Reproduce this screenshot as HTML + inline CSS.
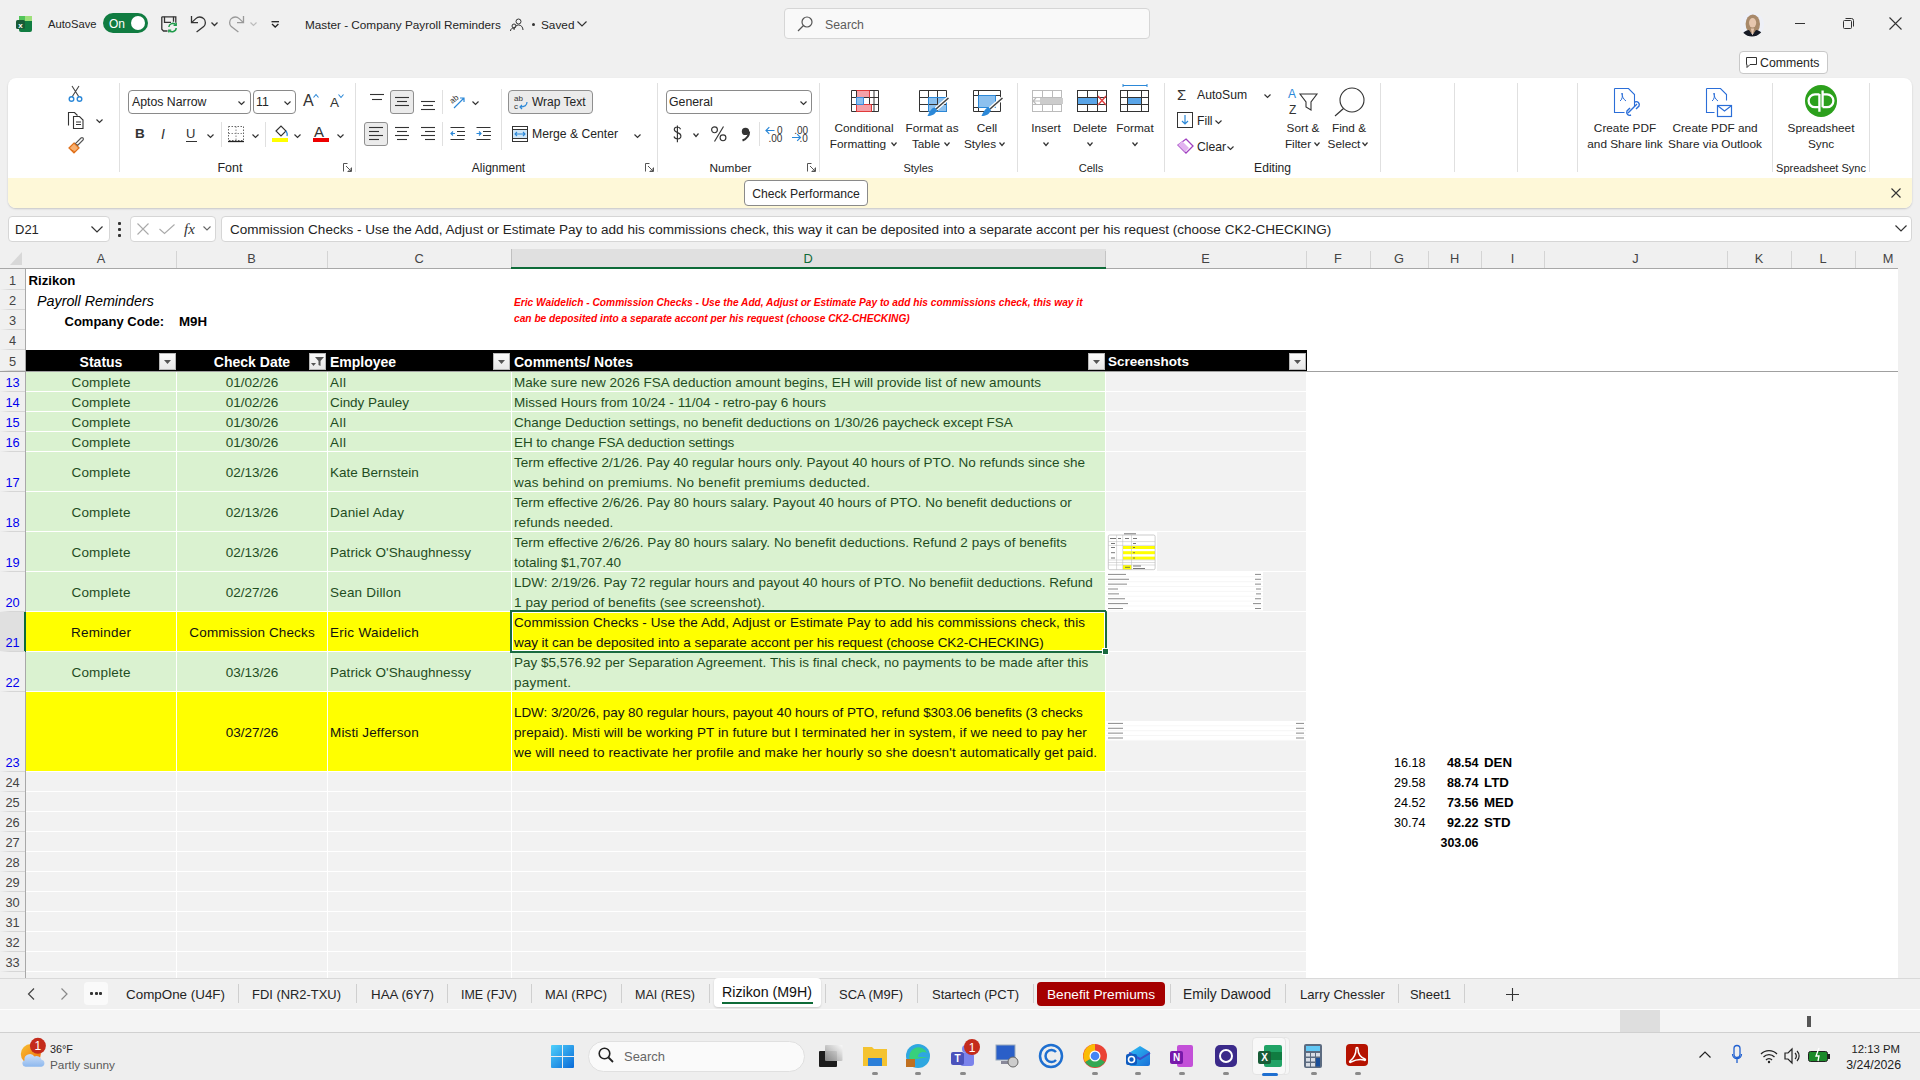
<!DOCTYPE html><html><head><meta charset="utf-8"><style>
html,body{margin:0;padding:0;}
body{width:1920px;height:1080px;position:relative;overflow:hidden;background:#f0f0f0;font-family:"Liberation Sans",sans-serif;}
.t{position:absolute;white-space:nowrap;line-height:20px;}
.r{position:absolute;}
svg.r{overflow:visible}
</style></head><body>
<svg class="r" style="left:16px;top:16px;" width="16" height="16" viewBox="0 0 16 16"><rect x="3" y="0" width="13" height="16" rx="2" fill="#107c41"/><rect x="9" y="0" width="7" height="5" fill="#9de07a"/><rect x="3" y="0" width="6" height="5" fill="#52c45a"/><rect x="0" y="4" width="9" height="9" rx="1.5" fill="#185c37"/><text x="4.5" y="11.5" font-size="8" font-weight="700" fill="#fff" text-anchor="middle" font-family="Liberation Sans">x</text></svg>
<div class="t" style="left:48px;top:14.0px;font-size:11.2px;color:#242424;font-weight:400;font-style:normal;">AutoSave</div>
<div class="r" style="left:103px;top:13px;width:45px;height:20px;border-radius:10px;background:#107c41;"></div>
<div class="r" style="left:131px;top:16px;width:14px;height:14px;border-radius:7px;background:#fff;"></div>
<div class="t" style="left:109px;top:14.3px;font-size:12px;color:#fff;font-weight:400;font-style:normal;">On</div>
<svg class="r" style="left:161px;top:16px;" width="17" height="17" viewBox="0 0 17 17"><path d="M0.8 0.8h14v6M0.8 0.8v12.5l1.7 1.7h4" fill="none" stroke="#333" stroke-width="1.3"/><path d="M3.5 0.8v5.5h6.5M12.5 0.8v5" fill="none" stroke="#333" stroke-width="1.3"/><path d="M7.8 11a4 4 0 0 1 7-2.2M15.2 12a4 4 0 0 1-7 2.4" fill="none" stroke="#1e9b4a" stroke-width="1.5"/><path d="M15.2 6.8v2.6h-2.6M7.8 16.5v-2.4h2.4" fill="none" stroke="#1e9b4a" stroke-width="1.4"/></svg>
<svg class="r" style="left:190px;top:16px;" width="16" height="17" viewBox="0 0 16 17"><path d="M1.5 0v6.7H8" fill="none" stroke="#333" stroke-width="1.3"/><path d="M1.8 6.4L5.8 2.6a5.6 5.6 0 0 1 7.9 8L6.6 16" fill="none" stroke="#333" stroke-width="1.3"/></svg>
<svg class="r" style="left:211px;top:22px;" width="7" height="4" viewBox="0 0 7 4"><path d="M0.5 0.5l3 3 3-3" fill="none" stroke="#333" stroke-width="1.3"/></svg>
<svg class="r" style="left:229px;top:16px;" width="16" height="17" viewBox="0 0 16 17"><path d="M14.5 0v6.7H8" fill="none" stroke="#999" stroke-width="1.3"/><path d="M14.2 6.4L10.2 2.6a5.6 5.6 0 0 0-7.9 8L9.4 16" fill="none" stroke="#999" stroke-width="1.3"/></svg>
<svg class="r" style="left:250px;top:22px;" width="7" height="4" viewBox="0 0 7 4"><path d="M0.5 0.5l3 3 3-3" fill="none" stroke="#bbb" stroke-width="1.2"/></svg>
<svg class="r" style="left:271px;top:21px;" width="9" height="7" viewBox="0 0 9 7"><path d="M0.5 0.7h7.5" stroke="#222" stroke-width="1.3"/><path d="M1 3l3.2 3 3.2-3" fill="none" stroke="#222" stroke-width="1.3"/></svg>
<div class="t" style="left:305px;top:14.8px;font-size:11.75px;color:#242424;font-weight:400;font-style:normal;">Master - Company Payroll Reminders</div>
<svg class="r" style="left:510px;top:18px;" width="13" height="13" viewBox="0 0 13 13"><circle cx="8.5" cy="3.5" r="2.5" fill="none" stroke="#333" stroke-width="1"/><path d="M4 12c0-3 2-5 4.5-5S13 9 13 12" fill="none" stroke="#333" stroke-width="1"/><circle cx="4" cy="8" r="2" fill="none" stroke="#333" stroke-width="1"/><path d="M0.5 13c0-2 1.5-3 3.5-3" fill="none" stroke="#333" stroke-width="1"/></svg>
<div class="r" style="left:532px;top:23px;width:3px;height:3px;background:#333;border-radius:2px;"></div>
<div class="t" style="left:541px;top:14.8px;font-size:11.8px;color:#242424;font-weight:400;font-style:normal;">Saved</div>
<svg class="r" style="left:577px;top:21px;" width="10" height="6" viewBox="0 0 10 6"><path d="M0.5 0.5l4.5 4.5 4.5-4.5" fill="none" stroke="#333" stroke-width="1.2"/></svg>
<div class="r" style="left:784px;top:8px;width:366px;height:31px;border-radius:4px;background:#f9f9f9;border:1px solid #d6d6d6;box-sizing:border-box;"></div>
<svg class="r" style="left:797px;top:16px;" width="16" height="16" viewBox="0 0 16 16"><circle cx="10" cy="6" r="5" fill="none" stroke="#555" stroke-width="1.2"/><path d="M6.5 9.5L1 15" stroke="#555" stroke-width="1.3"/></svg>
<div class="t" style="left:825px;top:14.8px;font-size:12.31px;color:#5c5c5c;font-weight:400;font-style:normal;">Search</div>
<svg class="r" style="left:1740px;top:12px;" width="24" height="25" viewBox="0 0 24 25"><defs><clipPath id="av"><circle cx="12" cy="12.5" r="12"/></clipPath></defs><g clip-path="url(#av)"><rect x="0" y="0" width="24" height="25" fill="#eef0f7"/><ellipse cx="12.8" cy="12" rx="7.2" ry="9.5" fill="#a8896a"/><ellipse cx="12.6" cy="10.8" rx="3.6" ry="4.8" fill="#e6c6ae"/><path d="M1.5 26c0-4.5 3-7.5 7.5-8l3.5 5 3.5-5c4.5.5 7.5 3.5 7.5 8z" fill="#161a24"/><path d="M10.8 16.5l1.7 7 1.7-7z" fill="#e6c6ae"/></g></svg>
<div class="r" style="left:1795px;top:23px;width:10px;height:1px;background:#333;"></div>
<svg class="r" style="left:1843px;top:18px;" width="11" height="11" viewBox="0 0 11 11"><rect x="0.5" y="2.5" width="8" height="8" rx="1" fill="none" stroke="#333"/><path d="M2.5 0.5h6a2 2 0 0 1 2 2v6" fill="none" stroke="#333"/></svg>
<svg class="r" style="left:1889px;top:17px;" width="13" height="13" viewBox="0 0 13 13"><path d="M0.5 0.5l12 12M12.5 0.5l-12 12" stroke="#333" stroke-width="1.1"/></svg>
<div class="r" style="left:1739px;top:51px;width:89px;height:23px;border-radius:4px;background:#fff;border:1px solid #c8c8c8;box-sizing:border-box;"></div>
<svg class="r" style="left:1746px;top:57px;" width="11" height="11" viewBox="0 0 11 11"><path d="M0.5 0.5h10v7H4l-3 3v-3H0.5z" fill="none" stroke="#333" stroke-width="1"/></svg>
<div class="t" style="left:1760px;top:53.3px;font-size:12.3px;color:#242424;font-weight:400;font-style:normal;">Comments</div>
<div class="r" style="left:8px;top:78px;width:1904px;height:130px;border-radius:8px;background:#fff;box-shadow:0 1px 2px rgba(0,0,0,0.18);overflow:hidden;"><div style="position:absolute;left:0;top:100px;width:1904px;height:30px;background:#fef8d8;"></div></div>
<div class="r" style="left:119px;top:83px;width:1px;height:89px;background:#e0e0e0;"></div>
<div class="r" style="left:355px;top:83px;width:1px;height:89px;background:#e0e0e0;"></div>
<div class="r" style="left:657px;top:83px;width:1px;height:89px;background:#e0e0e0;"></div>
<div class="r" style="left:819px;top:83px;width:1px;height:89px;background:#e0e0e0;"></div>
<div class="r" style="left:1017px;top:83px;width:1px;height:89px;background:#e0e0e0;"></div>
<div class="r" style="left:1164px;top:83px;width:1px;height:89px;background:#e0e0e0;"></div>
<div class="r" style="left:1380px;top:83px;width:1px;height:89px;background:#e0e0e0;"></div>
<div class="r" style="left:1454px;top:83px;width:1px;height:89px;background:#e0e0e0;"></div>
<div class="r" style="left:1517px;top:83px;width:1px;height:89px;background:#e0e0e0;"></div>
<div class="r" style="left:1577px;top:83px;width:1px;height:89px;background:#e0e0e0;"></div>
<div class="r" style="left:1772px;top:83px;width:1px;height:89px;background:#e0e0e0;"></div>
<div class="r" style="left:1869px;top:83px;width:1px;height:89px;background:#e0e0e0;"></div>
<div class="t" style="left:-770px;width:2000px;text-align:center;top:158.3px;font-size:12.5px;color:#242424;font-weight:400;font-style:normal;">Font</div>
<div class="t" style="left:-501.5px;width:2000px;text-align:center;top:158.3px;font-size:12.03px;color:#242424;font-weight:400;font-style:normal;">Alignment</div>
<div class="t" style="left:-269.5px;width:2000px;text-align:center;top:158.3px;font-size:11.81px;color:#242424;font-weight:400;font-style:normal;">Number</div>
<div class="t" style="left:-81.70000000000005px;width:2000px;text-align:center;top:158.3px;font-size:10.91px;color:#242424;font-weight:400;font-style:normal;">Styles</div>
<div class="t" style="left:91px;width:2000px;text-align:center;top:158.3px;font-size:11.11px;color:#242424;font-weight:400;font-style:normal;">Cells</div>
<div class="t" style="left:272.5999999999999px;width:2000px;text-align:center;top:158.3px;font-size:12.1px;color:#242424;font-weight:400;font-style:normal;">Editing</div>
<div class="t" style="left:821px;width:2000px;text-align:center;top:158.3px;font-size:11.01px;color:#242424;font-weight:400;font-style:normal;">Spreadsheet Sync</div>
<svg class="r" style="left:343px;top:163px;" width="9" height="9" viewBox="0 0 9 9"><path d="M0.5 8.5V0.5h4M8.5 4.5v4h-4M3 3l5 5M5 8h3V5" fill="none" stroke="#555" stroke-width="1"/></svg>
<svg class="r" style="left:645px;top:163px;" width="9" height="9" viewBox="0 0 9 9"><path d="M0.5 8.5V0.5h4M8.5 4.5v4h-4M3 3l5 5M5 8h3V5" fill="none" stroke="#555" stroke-width="1"/></svg>
<svg class="r" style="left:807px;top:163px;" width="9" height="9" viewBox="0 0 9 9"><path d="M0.5 8.5V0.5h4M8.5 4.5v4h-4M3 3l5 5M5 8h3V5" fill="none" stroke="#555" stroke-width="1"/></svg>
<svg class="r" style="left:68px;top:86px;" width="15" height="16" viewBox="0 0 15 16"><path d="M4 0l7 11M11 0L4 11" stroke="#444" stroke-width="1.1"/><circle cx="3.5" cy="13" r="2.3" fill="none" stroke="#2b88d8" stroke-width="1.4"/><circle cx="11.5" cy="13" r="2.3" fill="none" stroke="#2b88d8" stroke-width="1.4"/></svg>
<svg class="r" style="left:68px;top:112px;" width="16" height="17" viewBox="0 0 16 17"><path d="M0.5 13.5V0.5h6l3 3" fill="none" stroke="#333" stroke-width="1.1"/><path d="M5.5 4.5h6l3.5 3.5v8.5H5.5z" fill="#fff" stroke="#333" stroke-width="1.1"/><path d="M8 10h5M8 12.5h5" stroke="#333" stroke-width="1"/></svg>
<svg class="r" style="left:96px;top:119px;" width="7" height="4" viewBox="0 0 7 4"><path d="M0.5 0.5l3 3 3-3" fill="none" stroke="#333" stroke-width="1.2"/></svg>
<svg class="r" style="left:68px;top:137px;" width="17" height="17" viewBox="0 0 17 17"><path d="M9.5 8.5l5.5-5.5a1.4 1.4 0 0 0-2-2L7.5 6.5z" fill="#fff" stroke="#555" stroke-width="1.1"/><path d="M6 6l5 5" stroke="#555" stroke-width="1.1"/><path d="M1 11l5-5 5 5-5 5z" fill="#f8b070" stroke="#e0701a" stroke-width="1.2"/><path d="M2 12l5 3" stroke="#e0701a" stroke-width="1"/></svg>
<div class="r" style="left:128px;top:90px;width:123px;height:24px;background:#fff;border:1px solid #8a8a8a;border-radius:4px;box-sizing:border-box;"></div>
<div class="t" style="left:132px;top:92.3px;font-size:12.3px;color:#242424;font-weight:400;font-style:normal;">Aptos Narrow</div>
<svg class="r" style="left:238px;top:101px;" width="7" height="4" viewBox="0 0 7 4"><path d="M0.5 0.5l3.0 3 3.0-3" fill="none" stroke="#333" stroke-width="1.2"/></svg>
<div class="r" style="left:253px;top:90px;width:43px;height:24px;background:#fff;border:1px solid #8a8a8a;border-radius:4px;box-sizing:border-box;"></div>
<div class="t" style="left:256px;top:92.3px;font-size:12.3px;color:#242424;font-weight:400;font-style:normal;">11</div>
<svg class="r" style="left:284px;top:101px;" width="7" height="4" viewBox="0 0 7 4"><path d="M0.5 0.5l3.0 3 3.0-3" fill="none" stroke="#333" stroke-width="1.2"/></svg>
<div class="t" style="left:303px;top:90.8px;font-size:16px;color:#333;font-weight:400;font-style:normal;">A</div>
<svg class="r" style="left:313px;top:94px;" width="6" height="4" viewBox="0 0 6 4"><path d="M0.5 3.5l2.5-3 2.5 3" fill="none" stroke="#2b88d8" stroke-width="1.1"/></svg>
<div class="t" style="left:330px;top:92.8px;font-size:13.5px;color:#333;font-weight:400;font-style:normal;">A</div>
<svg class="r" style="left:338px;top:94px;" width="6" height="4" viewBox="0 0 6 4"><path d="M0.5 0.5l2.5 3 2.5-3" fill="none" stroke="#2b88d8" stroke-width="1.1"/></svg>
<div class="t" style="left:135px;top:124.3px;font-size:13.5px;color:#333;font-weight:700;font-style:normal;">B</div>
<div class="t" style="left:161px;top:124.3px;font-size:14px;color:#333;font-weight:400;font-style:italic;">I</div>
<div class="t" style="left:186px;top:123.8px;font-size:13px;color:#333;font-weight:400;font-style:normal;">U</div>
<div class="r" style="left:186px;top:141px;width:11px;height:1px;background:#333;"></div>
<svg class="r" style="left:207px;top:134px;" width="7" height="4" viewBox="0 0 7 4"><path d="M0.5 0.5l3.0 3 3.0-3" fill="none" stroke="#333" stroke-width="1.2"/></svg>
<div class="r" style="left:221px;top:122px;width:1px;height:25px;background:#e0e0e0;"></div>
<svg class="r" style="left:228px;top:126px;" width="16" height="16" viewBox="0 0 16 16"><rect x="0.5" y="0.5" width="15" height="14" fill="none" stroke="#666" stroke-dasharray="1.5 1.5"/><path d="M8 0.5v14M0.5 7.5h15" stroke="#888" stroke-dasharray="1.5 1.5"/><path d="M0 15.5h16" stroke="#222" stroke-width="1.3"/></svg>
<svg class="r" style="left:252px;top:134px;" width="7" height="4" viewBox="0 0 7 4"><path d="M0.5 0.5l3.0 3 3.0-3" fill="none" stroke="#333" stroke-width="1.2"/></svg>
<div class="r" style="left:265px;top:122px;width:1px;height:25px;background:#e0e0e0;"></div>
<svg class="r" style="left:272px;top:125px;" width="17" height="13" viewBox="0 0 17 13"><path d="M4 6l5-5 5 5-5 5z" fill="none" stroke="#333" stroke-width="1.1"/><path d="M14 6c1 2 2 3 1 5" fill="none" stroke="#2b88d8" stroke-width="1.4"/></svg>
<div class="r" style="left:272px;top:138px;width:16px;height:4px;background:#ffff00;"></div>
<svg class="r" style="left:294px;top:134px;" width="7" height="4" viewBox="0 0 7 4"><path d="M0.5 0.5l3.0 3 3.0-3" fill="none" stroke="#333" stroke-width="1.2"/></svg>
<div class="t" style="left:314px;top:121.8px;font-size:15px;color:#333;font-weight:400;font-style:normal;">A</div>
<div class="r" style="left:313px;top:138px;width:16px;height:4px;background:#ee0000;"></div>
<svg class="r" style="left:337px;top:134px;" width="7" height="4" viewBox="0 0 7 4"><path d="M0.5 0.5l3.0 3 3.0-3" fill="none" stroke="#333" stroke-width="1.2"/></svg>
<svg class="r" style="left:370px;top:94px;" width="20" height="11" viewBox="0 0 20 11"><path d="M0 0.5h14" stroke="#333" stroke-width="1.1"/><path d="M2 5.5h10" stroke="#333" stroke-width="1.1"/></svg>
<div class="r" style="left:390px;top:90px;width:24px;height:24px;background:#ebebeb;border:1px solid #8f8f8f;border-radius:3px;box-sizing:border-box;"></div>
<svg class="r" style="left:395px;top:97px;" width="20" height="13" viewBox="0 0 20 13"><path d="M0 0.5h14" stroke="#333" stroke-width="1.1"/><path d="M2 4.5h10" stroke="#333" stroke-width="1.1"/><path d="M0 8.5h14" stroke="#333" stroke-width="1.1"/></svg>
<svg class="r" style="left:421px;top:101px;" width="20" height="13" viewBox="0 0 20 13"><path d="M0 0.5h14" stroke="#333" stroke-width="1.1"/><path d="M2 4.5h10" stroke="#333" stroke-width="1.1"/><path d="M0 8.5h14" stroke="#333" stroke-width="1.1"/></svg>
<div class="r" style="left:442px;top:90px;width:1px;height:24px;background:#e0e0e0;"></div>
<svg class="r" style="left:449px;top:93px;" width="17" height="17" viewBox="0 0 17 17"><text x="1" y="9" font-size="8" fill="#333" transform="rotate(-40 5 7)" font-family="Liberation Sans">ab</text><path d="M5 15L15 5M11 5h4v4" fill="none" stroke="#2b88d8" stroke-width="1.2"/></svg>
<svg class="r" style="left:472px;top:101px;" width="7" height="4" viewBox="0 0 7 4"><path d="M0.5 0.5l3.0 3 3.0-3" fill="none" stroke="#333" stroke-width="1.2"/></svg>
<div class="r" style="left:501px;top:89px;width:1px;height:61px;background:#e0e0e0;"></div>
<div class="r" style="left:364px;top:122px;width:24px;height:24px;background:#ebebeb;border:1px solid #8f8f8f;border-radius:3px;box-sizing:border-box;"></div>
<svg class="r" style="left:369px;top:127px;" width="20" height="17" viewBox="0 0 20 17"><path d="M0 0.5h14" stroke="#333" stroke-width="1.1"/><path d="M0 4.5h10" stroke="#333" stroke-width="1.1"/><path d="M0 8.5h14" stroke="#333" stroke-width="1.1"/><path d="M0 12.5h10" stroke="#333" stroke-width="1.1"/></svg>
<svg class="r" style="left:395px;top:127px;" width="20" height="17" viewBox="0 0 20 17"><path d="M0 0.5h14" stroke="#333" stroke-width="1.1"/><path d="M2 4.5h10" stroke="#333" stroke-width="1.1"/><path d="M0 8.5h14" stroke="#333" stroke-width="1.1"/><path d="M2 12.5h10" stroke="#333" stroke-width="1.1"/></svg>
<svg class="r" style="left:421px;top:127px;" width="20" height="17" viewBox="0 0 20 17"><path d="M0 0.5h14" stroke="#333" stroke-width="1.1"/><path d="M4 4.5h10" stroke="#333" stroke-width="1.1"/><path d="M0 8.5h14" stroke="#333" stroke-width="1.1"/><path d="M4 12.5h10" stroke="#333" stroke-width="1.1"/></svg>
<div class="r" style="left:442px;top:122px;width:1px;height:24px;background:#e0e0e0;"></div>
<svg class="r" style="left:450px;top:127px;" width="16" height="14" viewBox="0 0 16 14"><path d="M0.5 0.5h14M7 4.5h8M7 8.5h8M0.5 12.5h14" stroke="#333" stroke-width="1.1"/><path d="M5 6.5H1M3 4.5l-2 2 2 2" fill="none" stroke="#2b88d8" stroke-width="1.2"/></svg>
<svg class="r" style="left:476px;top:127px;" width="16" height="14" viewBox="0 0 16 14"><path d="M0.5 0.5h14M7 4.5h8M7 8.5h8M0.5 12.5h14" stroke="#333" stroke-width="1.1"/><path d="M0.5 6.5H5M3 4.5l2 2-2 2" fill="none" stroke="#2b88d8" stroke-width="1.2"/></svg>
<div class="r" style="left:508px;top:90px;width:85px;height:24px;background:#ebebeb;border:1px solid #8f8f8f;border-radius:4px;box-sizing:border-box;"></div>
<svg class="r" style="left:514px;top:94px;" width="14" height="16" viewBox="0 0 14 16"><text x="0" y="7" font-size="8" fill="#333" font-family="Liberation Sans">ab</text><text x="0" y="15" font-size="8" fill="#333" font-family="Liberation Sans">c</text><path d="M13 8c0 4-3 5-7 5M8 11l-2 2 2 2" fill="none" stroke="#2b88d8" stroke-width="1.2"/></svg>
<div class="t" style="left:532px;top:92.3px;font-size:12px;color:#242424;font-weight:400;font-style:normal;">Wrap Text</div>
<svg class="r" style="left:512px;top:126px;" width="16" height="16" viewBox="0 0 16 16"><rect x="0.5" y="0.5" width="15" height="15" fill="none" stroke="#333"/><path d="M0.5 3.5h15M0.5 12.5h15" stroke="#333"/><rect x="1" y="4" width="14" height="8" fill="#cfe6f7"/><path d="M3 8h10M5 6l-2 2 2 2M11 6l2 2-2 2" fill="none" stroke="#2b88d8" stroke-width="1.1"/></svg>
<div class="t" style="left:532px;top:124.3px;font-size:12.2px;color:#242424;font-weight:400;font-style:normal;">Merge &amp; Center</div>
<svg class="r" style="left:634px;top:134px;" width="7" height="4" viewBox="0 0 7 4"><path d="M0.5 0.5l3.0 3 3.0-3" fill="none" stroke="#333" stroke-width="1.2"/></svg>
<div class="r" style="left:666px;top:90px;width:146px;height:24px;background:#fff;border:1px solid #8a8a8a;border-radius:4px;box-sizing:border-box;"></div>
<div class="t" style="left:669px;top:92.3px;font-size:12.3px;color:#242424;font-weight:400;font-style:normal;">General</div>
<svg class="r" style="left:800px;top:101px;" width="7" height="4" viewBox="0 0 7 4"><path d="M0.5 0.5l3.0 3 3.0-3" fill="none" stroke="#333" stroke-width="1.2"/></svg>
<svg class="r" style="left:673px;top:125px;" width="10" height="18" viewBox="0 0 10 18"><path d="M7.6 4.2C7 2.6 5.8 2 4.4 2 2.6 2 1.3 3 1.3 4.6c0 1.6 1.2 2.3 3.2 3 2 .7 3.4 1.5 3.4 3.3 0 1.8-1.5 2.9-3.4 2.9-1.7 0-3-.8-3.5-2.3M4.4 0.6v16.6" fill="none" stroke="#333" stroke-width="1.15"/></svg>
<svg class="r" style="left:693px;top:133px;" width="6" height="4" viewBox="0 0 6 4"><path d="M0.5 0.5l2.5 3 2.5-3" fill="none" stroke="#333" stroke-width="1.2"/></svg>
<svg class="r" style="left:711px;top:126px;" width="16" height="16" viewBox="0 0 16 16"><circle cx="3.5" cy="3.8" r="2.9" fill="none" stroke="#333" stroke-width="1.15"/><circle cx="12" cy="11.8" r="2.9" fill="none" stroke="#333" stroke-width="1.15"/><path d="M12.5 0.5L3.5 15.5" stroke="#333" stroke-width="1.15"/></svg>
<svg class="r" style="left:741px;top:127px;" width="9" height="14" viewBox="0 0 9 14"><circle cx="4.5" cy="4.4" r="3.7" fill="#333"/><path d="M8.1 4.6C8.2 8.5 5.5 11.8 1.5 13.5" fill="none" stroke="#333" stroke-width="2"/></svg>
<div class="r" style="left:759px;top:122px;width:1px;height:24px;background:#e0e0e0;"></div>
<svg class="r" style="left:765px;top:125px;" width="18" height="18" viewBox="0 0 18 18"><path d="M1 5.5h8.5M4.3 2.2L1 5.5l3.3 3.3" fill="none" stroke="#2b88d8" stroke-width="1.2"/><text x="12" y="9.3" font-size="10" fill="#333" font-family="Liberation Sans">0</text><text x="3.5" y="16.6" font-size="10" fill="#333" font-family="Liberation Sans">.00</text></svg>
<svg class="r" style="left:791px;top:125px;" width="18" height="18" viewBox="0 0 18 18"><text x="3.2" y="9.3" font-size="10" fill="#333" font-family="Liberation Sans">.00</text><path d="M1 12.5h8.5M6.2 9.2l3.3 3.3-3.3 3.3" fill="none" stroke="#2b88d8" stroke-width="1.2"/><text x="8.5" y="16.6" font-size="10" fill="#333" font-family="Liberation Sans">.0</text></svg>
<svg class="r" style="left:851px;top:90px;" width="29" height="22" viewBox="0 0 29 22"><rect x="5.5" y="0.5" width="13" height="7" fill="#f4a0a8" stroke="#e03a3a"/><rect x="5.5" y="7.5" width="7" height="7" fill="#8cc0ee" stroke="#3a8ee0"/><rect x="5.5" y="14.5" width="15" height="7" fill="#f4a0a8" stroke="#e03a3a"/><path d="M0.5 0.5h27v21H0.5z M0.5 7.5h27M0.5 14.5h27M5.5 0.5v21M23 0.5v21M18.5 7.5v7" fill="none" stroke="#333"/><path d="M5.5 0.5h13v7M5.5 7.5h7v7M5.5 14.5h15v7h-15z" fill="none" stroke="#e03a3a"/><path d="M5.5 7.5h7v7h-7z" fill="none" stroke="#3a8ee0"/></svg>
<div class="t" style="left:-136px;width:2000px;text-align:center;top:118.0px;font-size:11.8px;color:#242424;font-weight:400;font-style:normal;">Conditional</div>
<div class="t" style="left:-142px;width:2000px;text-align:center;top:134.0px;font-size:11.8px;color:#242424;font-weight:400;font-style:normal;">Formatting</div>
<svg class="r" style="left:891px;top:142px;" width="6" height="4" viewBox="0 0 6 4"><path d="M0.5 0.5l2.5 3 2.5-3" fill="none" stroke="#333" stroke-width="1.2"/></svg>
<svg class="r" style="left:919px;top:90px;" width="32" height="28" viewBox="0 0 32 28"><rect x="9.5" y="7.5" width="18" height="14" fill="#8cc0ee"/><path d="M0.5 0.5h27v21H0.5z M0.5 7.5h27M0.5 14.5h27M9.5 0.5v21M18.5 0.5v21" fill="none" stroke="#333"/><path d="M9.5 7.5h18v14h-18z" fill="none" stroke="#2b88d8"/><path d="M29.5 8L17 19" stroke="#fff" stroke-width="4"/><path d="M29.5 8L17 19" stroke="#444" stroke-width="1.6"/><path d="M16 17.5c-3 0-5 3-7.5 8.5 4 0 8-1.5 9.5-6z" fill="#2b88d8"/></svg>
<div class="t" style="left:-68px;width:2000px;text-align:center;top:118.0px;font-size:11.8px;color:#242424;font-weight:400;font-style:normal;">Format as</div>
<div class="t" style="left:-74px;width:2000px;text-align:center;top:134.0px;font-size:11.8px;color:#242424;font-weight:400;font-style:normal;">Table</div>
<svg class="r" style="left:944px;top:142px;" width="6" height="4" viewBox="0 0 6 4"><path d="M0.5 0.5l2.5 3 2.5-3" fill="none" stroke="#333" stroke-width="1.2"/></svg>
<svg class="r" style="left:973px;top:90px;" width="32" height="28" viewBox="0 0 32 28"><rect x="5.5" y="5.5" width="17" height="12" fill="#8cc0ee"/><path d="M0.5 0.5h27v21H0.5z M0.5 5.5h27M5.5 0.5v21M0.5 17.5h5" fill="none" stroke="#333"/><path d="M5.5 5.5h17v12h-17z" fill="none" stroke="#2b88d8"/><path d="M29.5 8L17 19" stroke="#fff" stroke-width="4"/><path d="M29.5 8L17 19" stroke="#444" stroke-width="1.6"/><path d="M16 17.5c-3 0-5 3-7.5 8.5 4 0 8-1.5 9.5-6z" fill="#2b88d8"/></svg>
<div class="t" style="left:-13px;width:2000px;text-align:center;top:118.0px;font-size:11.8px;color:#242424;font-weight:400;font-style:normal;">Cell</div>
<div class="t" style="left:-20px;width:2000px;text-align:center;top:134.0px;font-size:11.8px;color:#242424;font-weight:400;font-style:normal;">Styles</div>
<svg class="r" style="left:999px;top:142px;" width="6" height="4" viewBox="0 0 6 4"><path d="M0.5 0.5l2.5 3 2.5-3" fill="none" stroke="#333" stroke-width="1.2"/></svg>
<svg class="r" style="left:1032px;top:90px;" width="32" height="22" viewBox="0 0 32 22"><rect x="0.5" y="0.5" width="29" height="21" fill="none" stroke="#bbb"/><path d="M0.5 7.5h29M0.5 14.5h29M10.5 0.5v21M20.5 0.5v21" stroke="#bbb"/><rect x="8" y="8" width="23" height="6" fill="#ccc"/><path d="M8 11H1M4 8l-3 3 3 3" fill="none" stroke="#bbb" stroke-width="1.2"/></svg>
<div class="t" style="left:46px;width:2000px;text-align:center;top:118.0px;font-size:11.8px;color:#242424;font-weight:400;font-style:normal;">Insert</div>
<svg class="r" style="left:1043px;top:142px;" width="6" height="4" viewBox="0 0 6 4"><path d="M0.5 0.5l2.5 3 2.5-3" fill="none" stroke="#333" stroke-width="1.2"/></svg>
<svg class="r" style="left:1077px;top:90px;" width="31" height="22" viewBox="0 0 31 22"><rect x="0.5" y="0.5" width="29" height="21" fill="none" stroke="#333"/><path d="M0.5 7.5h29M0.5 14.5h29M10.5 0.5v21M20.5 0.5v21" stroke="#333"/><rect x="1" y="8" width="19" height="6" fill="#5aa5e8"/><path d="M21 6l8 9M29 6l-8 9" stroke="#e04040" stroke-width="1.4"/></svg>
<div class="t" style="left:90px;width:2000px;text-align:center;top:118.0px;font-size:11.8px;color:#242424;font-weight:400;font-style:normal;">Delete</div>
<svg class="r" style="left:1087px;top:142px;" width="6" height="4" viewBox="0 0 6 4"><path d="M0.5 0.5l2.5 3 2.5-3" fill="none" stroke="#333" stroke-width="1.2"/></svg>
<svg class="r" style="left:1120px;top:84px;" width="30" height="28" viewBox="0 0 30 28"><path d="M3 1.5h24M3 0v3M27 0v3" stroke="#2b88d8" stroke-width="1"/><rect x="0.5" y="6.5" width="28" height="21" fill="none" stroke="#333"/><path d="M0.5 13.5h28M0.5 20.5h28M7.5 6.5v21M21.5 6.5v21" stroke="#333"/><rect x="8" y="14" width="13" height="6" fill="#5aa5e8"/></svg>
<div class="t" style="left:135px;width:2000px;text-align:center;top:118.0px;font-size:11.8px;color:#242424;font-weight:400;font-style:normal;">Format</div>
<svg class="r" style="left:1132px;top:142px;" width="6" height="4" viewBox="0 0 6 4"><path d="M0.5 0.5l2.5 3 2.5-3" fill="none" stroke="#333" stroke-width="1.2"/></svg>
<div class="t" style="left:1177px;top:84.8px;font-size:15px;color:#333;font-weight:400;font-style:normal;">Σ</div>
<div class="t" style="left:1197px;top:85.3px;font-size:12.2px;color:#242424;font-weight:400;font-style:normal;">AutoSum</div>
<svg class="r" style="left:1264px;top:94px;" width="7" height="4" viewBox="0 0 7 4"><path d="M0.5 0.5l3.0 3 3.0-3" fill="none" stroke="#333" stroke-width="1.2"/></svg>
<svg class="r" style="left:1177px;top:112px;" width="16" height="16" viewBox="0 0 16 16"><rect x="0.5" y="0.5" width="15" height="15" fill="none" stroke="#333"/><path d="M8 3v9M5 9l3 3 3-3" fill="none" stroke="#2b88d8" stroke-width="1.2"/></svg>
<div class="t" style="left:1197px;top:110.8px;font-size:12.2px;color:#242424;font-weight:400;font-style:normal;">Fill</div>
<svg class="r" style="left:1215px;top:120px;" width="7" height="4" viewBox="0 0 7 4"><path d="M0.5 0.5l3.0 3 3.0-3" fill="none" stroke="#333" stroke-width="1.2"/></svg>
<svg class="r" style="left:1177px;top:138px;" width="17" height="16" viewBox="0 0 17 16"><path d="M9 1l7 7-7 7-8-8z" fill="none" stroke="#a040c0" stroke-width="1.3"/><path d="M1 7l4-4 7 7-4 4z" fill="#e2b3f0"/></svg>
<div class="t" style="left:1197px;top:136.8px;font-size:12.2px;color:#242424;font-weight:400;font-style:normal;">Clear</div>
<svg class="r" style="left:1227px;top:146px;" width="7" height="4" viewBox="0 0 7 4"><path d="M0.5 0.5l3.0 3 3.0-3" fill="none" stroke="#333" stroke-width="1.2"/></svg>
<svg class="r" style="left:1288px;top:87px;" width="31" height="29" viewBox="0 0 31 29"><text x="0" y="11" font-size="12" fill="#2b88d8" font-family="Liberation Sans">A</text><text x="1" y="27" font-size="12" fill="#333" font-family="Liberation Sans">Z</text><path d="M12 7h17l-6 8v8l-5-3v-5z" fill="none" stroke="#333" stroke-width="1.1"/></svg>
<div class="t" style="left:303px;width:2000px;text-align:center;top:118.0px;font-size:11.8px;color:#242424;font-weight:400;font-style:normal;">Sort &amp;</div>
<div class="t" style="left:298px;width:2000px;text-align:center;top:134.0px;font-size:11.8px;color:#242424;font-weight:400;font-style:normal;">Filter</div>
<svg class="r" style="left:1314px;top:142px;" width="6" height="4" viewBox="0 0 6 4"><path d="M0.5 0.5l2.5 3 2.5-3" fill="none" stroke="#333" stroke-width="1.2"/></svg>
<svg class="r" style="left:1334px;top:87px;" width="31" height="29" viewBox="0 0 31 29"><circle cx="18" cy="13" r="12" fill="none" stroke="#333" stroke-width="1.1"/><path d="M9.5 21.5L1 29" stroke="#333" stroke-width="1.2"/></svg>
<div class="t" style="left:349px;width:2000px;text-align:center;top:118.0px;font-size:11.8px;color:#242424;font-weight:400;font-style:normal;">Find &amp;</div>
<div class="t" style="left:344px;width:2000px;text-align:center;top:134.0px;font-size:11.8px;color:#242424;font-weight:400;font-style:normal;">Select</div>
<svg class="r" style="left:1362px;top:142px;" width="6" height="4" viewBox="0 0 6 4"><path d="M0.5 0.5l2.5 3 2.5-3" fill="none" stroke="#333" stroke-width="1.2"/></svg>
<svg class="r" style="left:1614px;top:88px;" width="28" height="30" viewBox="0 0 28 30"><path d="M0.5 0.5h14l6 6v12" fill="none" stroke="#2b6ed8" stroke-width="1.1"/><path d="M0.5 0.5v24h10" fill="none" stroke="#2b6ed8" stroke-width="1.1"/><path d="M6 13c2-1 3-5 2-8 0 3 1 6 4 8" fill="none" stroke="#2b6ed8" stroke-width="1"/><path d="M14 25l9-9M17 27a3 3 0 0 1-4-4l3-3M21 14a3 3 0 0 1 4 4l-3 3" fill="none" stroke="#2b6ed8" stroke-width="1.4"/></svg>
<div class="t" style="left:625px;width:2000px;text-align:center;top:118.0px;font-size:11.8px;color:#242424;font-weight:400;font-style:normal;">Create PDF</div>
<div class="t" style="left:625px;width:2000px;text-align:center;top:134.0px;font-size:11.8px;color:#242424;font-weight:400;font-style:normal;">and Share link</div>
<svg class="r" style="left:1706px;top:88px;" width="28" height="30" viewBox="0 0 28 30"><path d="M0.5 0.5h14l6 6v6" fill="none" stroke="#2b6ed8" stroke-width="1.1"/><path d="M0.5 0.5v24h8" fill="none" stroke="#2b6ed8" stroke-width="1.1"/><path d="M6 13c2-1 3-5 2-8 0 3 1 6 4 8" fill="none" stroke="#2b6ed8" stroke-width="1"/><rect x="11.5" y="17.5" width="14" height="11" fill="#fff" stroke="#2b6ed8" stroke-width="1.2"/><path d="M12 18l6.5 5 6.5-5" fill="none" stroke="#2b6ed8" stroke-width="1.1"/></svg>
<div class="t" style="left:715px;width:2000px;text-align:center;top:118.0px;font-size:11.8px;color:#242424;font-weight:400;font-style:normal;">Create PDF and</div>
<div class="t" style="left:715px;width:2000px;text-align:center;top:134.0px;font-size:11.8px;color:#242424;font-weight:400;font-style:normal;">Share via Outlook</div>
<svg class="r" style="left:1805px;top:85px;" width="32" height="32" viewBox="0 0 32 32"><circle cx="16" cy="16" r="16" fill="#2ca01c"/><path d="M14.4 9.4H10a6.4 6.4 0 0 0 0 12.8h4.4M14.4 9v17.7M17.6 5.6v16.6M17.6 9.4H22a6.4 6.4 0 0 1 0 12.8h-4.4" fill="none" stroke="#fff" stroke-width="2.3"/></svg>
<div class="t" style="left:821px;width:2000px;text-align:center;top:118.0px;font-size:11.8px;color:#242424;font-weight:400;font-style:normal;">Spreadsheet</div>
<div class="t" style="left:821px;width:2000px;text-align:center;top:134.0px;font-size:11.8px;color:#242424;font-weight:400;font-style:normal;">Sync</div>
<div class="r" style="left:744px;top:180px;width:124px;height:26px;background:#fff;border:1px solid #8a8a8a;border-radius:4px;box-sizing:border-box;"></div>
<div class="t" style="left:-194px;width:2000px;text-align:center;top:183.8px;font-size:12.2px;color:#242424;font-weight:400;font-style:normal;">Check Performance</div>
<svg class="r" style="left:1891px;top:188px;" width="10" height="10" viewBox="0 0 10 10"><path d="M0.5 0.5l9 9M9.5 0.5l-9 9" stroke="#333" stroke-width="1.1"/></svg>
<div class="r" style="left:8px;top:216px;width:102px;height:26px;background:#fff;border:1px solid #d6d6d6;border-radius:4px;box-sizing:border-box;"></div>
<div class="t" style="left:15px;top:219.8px;font-size:13px;color:#242424;font-weight:400;font-style:normal;">D21</div>
<svg class="r" style="left:91px;top:226px;" width="12" height="7" viewBox="0 0 12 7"><path d="M0.5 0.5l5.5 5.5 5.5-5.5" fill="none" stroke="#333" stroke-width="1.2"/></svg>
<div class="r" style="left:118px;top:222px;width:3px;height:3px;background:#333;border-radius:1px;"></div>
<div class="r" style="left:118px;top:228px;width:3px;height:3px;background:#333;border-radius:1px;"></div>
<div class="r" style="left:118px;top:234px;width:3px;height:3px;background:#333;border-radius:1px;"></div>
<div class="r" style="left:130px;top:216px;width:86px;height:26px;background:#fff;border:1px solid #d6d6d6;border-radius:4px;box-sizing:border-box;"></div>
<svg class="r" style="left:137px;top:223px;" width="12" height="12" viewBox="0 0 12 12"><path d="M0.5 0.5l11 11M11.5 0.5l-11 11" stroke="#aaa" stroke-width="1.1"/></svg>
<svg class="r" style="left:159px;top:224px;" width="16" height="10" viewBox="0 0 16 10"><path d="M0.5 5l5 4.5L15.5 0.5" fill="none" stroke="#aaa" stroke-width="1.1"/></svg>
<div class="t" style="left:184px;top:219.3px;font-size:15px;color:#333;font-weight:400;font-style:italic;font-family:'Liberation Serif',serif;">fx</div>
<svg class="r" style="left:203px;top:226px;" width="8" height="5" viewBox="0 0 8 5"><path d="M0.5 0.5l3.5 3.5 3.5-3.5" fill="none" stroke="#666" stroke-width="1.1"/></svg>
<div class="r" style="left:221px;top:216px;width:1691px;height:26px;background:#fff;border:1px solid #d6d6d6;border-radius:4px;box-sizing:border-box;"></div>
<div class="t" style="left:230px;top:219.8px;font-size:13.52px;color:#242424;font-weight:400;font-style:normal;">Commission Checks - Use the Add, Adjust or Estimate Pay to add his commissions check, this way it can be deposited into a separate accont per his request (choose CK2-CHECKING)</div>
<svg class="r" style="left:1895px;top:225px;" width="12" height="7" viewBox="0 0 12 7"><path d="M0.5 0.5l5.5 5.5 5.5-5.5" fill="none" stroke="#333" stroke-width="1.2"/></svg>
<div class="r" style="left:26px;top:269px;width:1872px;height:709px;background:#ffffff;"></div>
<div class="r" style="left:0px;top:249px;width:1898px;height:19px;background:#f0f0f0;"></div>
<div class="r" style="left:0px;top:268px;width:1898px;height:1px;background:#a8a8a8;"></div>
<svg class="r" style="left:10px;top:252px;" width="13" height="13" viewBox="0 0 13 13"><path d="M12 0v13H0z" fill="#d8d8d8"/></svg>
<div class="t" style="left:-899.0px;width:2000px;text-align:center;top:249.3px;font-size:12.8px;color:#444;font-weight:400;font-style:normal;">A</div>
<div class="r" style="left:176px;top:251px;width:1px;height:17px;background:#d4d4d4;"></div>
<div class="t" style="left:-748.5px;width:2000px;text-align:center;top:249.3px;font-size:12.8px;color:#444;font-weight:400;font-style:normal;">B</div>
<div class="r" style="left:327px;top:251px;width:1px;height:17px;background:#d4d4d4;"></div>
<div class="t" style="left:-581.0px;width:2000px;text-align:center;top:249.3px;font-size:12.8px;color:#444;font-weight:400;font-style:normal;">C</div>
<div class="r" style="left:511px;top:251px;width:1px;height:17px;background:#d4d4d4;"></div>
<div class="r" style="left:511px;top:249px;width:595px;height:18px;background:#e0e0e0;"></div>
<div class="r" style="left:511px;top:267px;width:595px;height:2px;background:#0e6b38;"></div>
<div class="r" style="left:1105px;top:251px;width:1px;height:16px;background:#c4c4c4;"></div>
<div class="t" style="left:-192.0px;width:2000px;text-align:center;top:249.3px;font-size:12.8px;color:#0e6b38;font-weight:400;font-style:normal;">D</div>
<div class="t" style="left:205.5px;width:2000px;text-align:center;top:249.3px;font-size:12.8px;color:#444;font-weight:400;font-style:normal;">E</div>
<div class="r" style="left:1306px;top:251px;width:1px;height:17px;background:#d4d4d4;"></div>
<div class="t" style="left:338.0px;width:2000px;text-align:center;top:249.3px;font-size:12.8px;color:#444;font-weight:400;font-style:normal;">F</div>
<div class="r" style="left:1370px;top:251px;width:1px;height:17px;background:#d4d4d4;"></div>
<div class="t" style="left:399.0px;width:2000px;text-align:center;top:249.3px;font-size:12.8px;color:#444;font-weight:400;font-style:normal;">G</div>
<div class="r" style="left:1428px;top:251px;width:1px;height:17px;background:#d4d4d4;"></div>
<div class="t" style="left:454.5px;width:2000px;text-align:center;top:249.3px;font-size:12.8px;color:#444;font-weight:400;font-style:normal;">H</div>
<div class="r" style="left:1481px;top:251px;width:1px;height:17px;background:#d4d4d4;"></div>
<div class="t" style="left:512.5px;width:2000px;text-align:center;top:249.3px;font-size:12.8px;color:#444;font-weight:400;font-style:normal;">I</div>
<div class="r" style="left:1544px;top:251px;width:1px;height:17px;background:#d4d4d4;"></div>
<div class="t" style="left:635.5px;width:2000px;text-align:center;top:249.3px;font-size:12.8px;color:#444;font-weight:400;font-style:normal;">J</div>
<div class="r" style="left:1727px;top:251px;width:1px;height:17px;background:#d4d4d4;"></div>
<div class="t" style="left:759.0px;width:2000px;text-align:center;top:249.3px;font-size:12.8px;color:#444;font-weight:400;font-style:normal;">K</div>
<div class="r" style="left:1791px;top:251px;width:1px;height:17px;background:#d4d4d4;"></div>
<div class="t" style="left:823.0px;width:2000px;text-align:center;top:249.3px;font-size:12.8px;color:#444;font-weight:400;font-style:normal;">L</div>
<div class="r" style="left:1855px;top:251px;width:1px;height:17px;background:#d4d4d4;"></div>
<div class="t" style="left:888px;width:2000px;text-align:center;top:249.3px;font-size:12.8px;color:#444;font-weight:400;font-style:normal;">M</div>
<div class="r" style="left:511px;top:249px;width:1px;height:18px;background:#c0c0c0;"></div>
<div class="r" style="left:0px;top:269px;width:25px;height:709px;background:#f0f0f0;"></div>
<div class="r" style="left:25px;top:269px;width:1px;height:709px;background:#a8a8a8;"></div>
<div class="t" style="left:-987.5px;width:2000px;text-align:center;top:271.3px;font-size:12.8px;color:#444;font-weight:400;font-style:normal;">1</div>
<div class="r" style="left:0;top:289px;width:25px;height:1px;background:linear-gradient(90deg,rgba(220,220,220,0),#d6d6d6 40%)"></div>
<div class="t" style="left:-987.5px;width:2000px;text-align:center;top:291.3px;font-size:12.8px;color:#444;font-weight:400;font-style:normal;">2</div>
<div class="r" style="left:0;top:309px;width:25px;height:1px;background:linear-gradient(90deg,rgba(220,220,220,0),#d6d6d6 40%)"></div>
<div class="t" style="left:-987.5px;width:2000px;text-align:center;top:311.3px;font-size:12.8px;color:#444;font-weight:400;font-style:normal;">3</div>
<div class="r" style="left:0;top:329px;width:25px;height:1px;background:linear-gradient(90deg,rgba(220,220,220,0),#d6d6d6 40%)"></div>
<div class="t" style="left:-987.5px;width:2000px;text-align:center;top:331.3px;font-size:12.8px;color:#444;font-weight:400;font-style:normal;">4</div>
<div class="r" style="left:0;top:349px;width:25px;height:1px;background:linear-gradient(90deg,rgba(220,220,220,0),#d6d6d6 40%)"></div>
<div class="t" style="left:-987.5px;width:2000px;text-align:center;top:352.3px;font-size:12.8px;color:#444;font-weight:400;font-style:normal;">5</div>
<div class="r" style="left:0;top:370px;width:25px;height:1px;background:linear-gradient(90deg,rgba(220,220,220,0),#d6d6d6 40%)"></div>
<div class="t" style="left:-987.5px;width:2000px;text-align:center;top:373.3px;font-size:12.8px;color:#0000ee;font-weight:400;font-style:normal;">13</div>
<div class="r" style="left:0;top:391px;width:25px;height:1px;background:linear-gradient(90deg,rgba(220,220,220,0),#d6d6d6 40%)"></div>
<div class="t" style="left:-987.5px;width:2000px;text-align:center;top:393.3px;font-size:12.8px;color:#0000ee;font-weight:400;font-style:normal;">14</div>
<div class="r" style="left:0;top:411px;width:25px;height:1px;background:linear-gradient(90deg,rgba(220,220,220,0),#d6d6d6 40%)"></div>
<div class="t" style="left:-987.5px;width:2000px;text-align:center;top:413.3px;font-size:12.8px;color:#0000ee;font-weight:400;font-style:normal;">15</div>
<div class="r" style="left:0;top:431px;width:25px;height:1px;background:linear-gradient(90deg,rgba(220,220,220,0),#d6d6d6 40%)"></div>
<div class="t" style="left:-987.5px;width:2000px;text-align:center;top:433.3px;font-size:12.8px;color:#0000ee;font-weight:400;font-style:normal;">16</div>
<div class="r" style="left:0;top:451px;width:25px;height:1px;background:linear-gradient(90deg,rgba(220,220,220,0),#d6d6d6 40%)"></div>
<div class="t" style="left:-987.5px;width:2000px;text-align:center;top:473.3px;font-size:12.8px;color:#0000ee;font-weight:400;font-style:normal;">17</div>
<div class="r" style="left:0;top:491px;width:25px;height:1px;background:linear-gradient(90deg,rgba(220,220,220,0),#d6d6d6 40%)"></div>
<div class="t" style="left:-987.5px;width:2000px;text-align:center;top:513.3px;font-size:12.8px;color:#0000ee;font-weight:400;font-style:normal;">18</div>
<div class="r" style="left:0;top:531px;width:25px;height:1px;background:linear-gradient(90deg,rgba(220,220,220,0),#d6d6d6 40%)"></div>
<div class="t" style="left:-987.5px;width:2000px;text-align:center;top:553.3px;font-size:12.8px;color:#0000ee;font-weight:400;font-style:normal;">19</div>
<div class="r" style="left:0;top:571px;width:25px;height:1px;background:linear-gradient(90deg,rgba(220,220,220,0),#d6d6d6 40%)"></div>
<div class="t" style="left:-987.5px;width:2000px;text-align:center;top:593.3px;font-size:12.8px;color:#0000ee;font-weight:400;font-style:normal;">20</div>
<div class="r" style="left:0;top:611px;width:25px;height:1px;background:linear-gradient(90deg,rgba(220,220,220,0),#d6d6d6 40%)"></div>
<div class="r" style="left:0px;top:612px;width:24px;height:39px;background:#e0e0e0;"></div>
<div class="r" style="left:24px;top:612px;width:2px;height:40px;background:#0e6b38;"></div>
<div class="t" style="left:-987.5px;width:2000px;text-align:center;top:633.3px;font-size:12.8px;color:#0000ee;font-weight:400;font-style:normal;">21</div>
<div class="r" style="left:0;top:651px;width:25px;height:1px;background:linear-gradient(90deg,rgba(220,220,220,0),#d6d6d6 40%)"></div>
<div class="t" style="left:-987.5px;width:2000px;text-align:center;top:673.3px;font-size:12.8px;color:#0000ee;font-weight:400;font-style:normal;">22</div>
<div class="r" style="left:0;top:691px;width:25px;height:1px;background:linear-gradient(90deg,rgba(220,220,220,0),#d6d6d6 40%)"></div>
<div class="t" style="left:-987.5px;width:2000px;text-align:center;top:753.3px;font-size:12.8px;color:#0000ee;font-weight:400;font-style:normal;">23</div>
<div class="r" style="left:0;top:771px;width:25px;height:1px;background:linear-gradient(90deg,rgba(220,220,220,0),#d6d6d6 40%)"></div>
<div class="t" style="left:-987.5px;width:2000px;text-align:center;top:773.3px;font-size:12.8px;color:#444;font-weight:400;font-style:normal;">24</div>
<div class="r" style="left:0;top:791px;width:25px;height:1px;background:linear-gradient(90deg,rgba(220,220,220,0),#d6d6d6 40%)"></div>
<div class="t" style="left:-987.5px;width:2000px;text-align:center;top:793.3px;font-size:12.8px;color:#444;font-weight:400;font-style:normal;">25</div>
<div class="r" style="left:0;top:811px;width:25px;height:1px;background:linear-gradient(90deg,rgba(220,220,220,0),#d6d6d6 40%)"></div>
<div class="t" style="left:-987.5px;width:2000px;text-align:center;top:813.3px;font-size:12.8px;color:#444;font-weight:400;font-style:normal;">26</div>
<div class="r" style="left:0;top:831px;width:25px;height:1px;background:linear-gradient(90deg,rgba(220,220,220,0),#d6d6d6 40%)"></div>
<div class="t" style="left:-987.5px;width:2000px;text-align:center;top:833.3px;font-size:12.8px;color:#444;font-weight:400;font-style:normal;">27</div>
<div class="r" style="left:0;top:851px;width:25px;height:1px;background:linear-gradient(90deg,rgba(220,220,220,0),#d6d6d6 40%)"></div>
<div class="t" style="left:-987.5px;width:2000px;text-align:center;top:853.3px;font-size:12.8px;color:#444;font-weight:400;font-style:normal;">28</div>
<div class="r" style="left:0;top:871px;width:25px;height:1px;background:linear-gradient(90deg,rgba(220,220,220,0),#d6d6d6 40%)"></div>
<div class="t" style="left:-987.5px;width:2000px;text-align:center;top:873.3px;font-size:12.8px;color:#444;font-weight:400;font-style:normal;">29</div>
<div class="r" style="left:0;top:891px;width:25px;height:1px;background:linear-gradient(90deg,rgba(220,220,220,0),#d6d6d6 40%)"></div>
<div class="t" style="left:-987.5px;width:2000px;text-align:center;top:893.3px;font-size:12.8px;color:#444;font-weight:400;font-style:normal;">30</div>
<div class="r" style="left:0;top:911px;width:25px;height:1px;background:linear-gradient(90deg,rgba(220,220,220,0),#d6d6d6 40%)"></div>
<div class="t" style="left:-987.5px;width:2000px;text-align:center;top:913.3px;font-size:12.8px;color:#444;font-weight:400;font-style:normal;">31</div>
<div class="r" style="left:0;top:931px;width:25px;height:1px;background:linear-gradient(90deg,rgba(220,220,220,0),#d6d6d6 40%)"></div>
<div class="t" style="left:-987.5px;width:2000px;text-align:center;top:933.3px;font-size:12.8px;color:#444;font-weight:400;font-style:normal;">32</div>
<div class="r" style="left:0;top:951px;width:25px;height:1px;background:linear-gradient(90deg,rgba(220,220,220,0),#d6d6d6 40%)"></div>
<div class="t" style="left:-987.5px;width:2000px;text-align:center;top:953.3px;font-size:12.8px;color:#444;font-weight:400;font-style:normal;">33</div>
<div class="r" style="left:0;top:971px;width:25px;height:1px;background:linear-gradient(90deg,rgba(220,220,220,0),#d6d6d6 40%)"></div>
<div class="t" style="left:-987.5px;width:2000px;text-align:center;top:973.3px;font-size:12.8px;color:#444;font-weight:400;font-style:normal;">34</div>
<div class="r" style="left:0;top:991px;width:25px;height:1px;background:linear-gradient(90deg,rgba(220,220,220,0),#d6d6d6 40%)"></div>
<div class="r" style="left:0px;top:371px;width:1898px;height:1px;background:#a0a0a0;"></div>
<div class="t" style="left:28.5px;top:270.5px;font-size:13.2px;color:#000;font-weight:700;font-style:normal;">Rizikon</div>
<div class="t" style="left:37px;top:291.2px;font-size:14.3px;color:#000;font-weight:400;font-style:italic;">Payroll Reminders</div>
<div class="t" style="left:64.5px;top:311.8px;font-size:13px;color:#000;font-weight:700;font-style:normal;">Company Code:</div>
<div class="t" style="left:179px;top:311.8px;font-size:13.3px;color:#000;font-weight:700;font-style:normal;">M9H</div>
<div class="t" style="left:514px;top:292.8px;font-size:10.2px;color:#ff0000;font-weight:700;font-style:italic;">Eric Waidelich - Commission Checks - Use the Add, Adjust or Estimate Pay to add his commissions check, this way it</div>
<div class="t" style="left:514px;top:308.8px;font-size:10.2px;color:#ff0000;font-weight:700;font-style:italic;">can be deposited into a separate accont per his request (choose CK2-CHECKING)</div>
<div class="r" style="left:26px;top:350px;width:1281px;height:21px;background:#000;"></div>
<div class="t" style="left:-899px;width:2000px;text-align:center;top:352.3px;font-size:14px;color:#fff;font-weight:700;font-style:normal;">Status</div>
<div class="t" style="left:-748px;width:2000px;text-align:center;top:352.3px;font-size:14px;color:#fff;font-weight:700;font-style:normal;">Check Date</div>
<div class="t" style="left:330px;top:352.3px;font-size:14px;color:#fff;font-weight:700;font-style:normal;">Employee</div>
<div class="t" style="left:514px;top:352.3px;font-size:14px;color:#fff;font-weight:700;font-style:normal;">Comments/ Notes</div>
<div class="t" style="left:1108px;top:352.3px;font-size:13.5px;color:#fff;font-weight:700;font-style:normal;">Screenshots</div>
<div class="r" style="left:159px;top:353px;width:17px;height:17px;background:linear-gradient(#fafafa,#e8e8e8);border:1px solid #b8b8b8;box-sizing:border-box;"></div>
<svg class="r" style="left:164px;top:360px;" width="7" height="4" viewBox="0 0 7 4"><path d="M0 0h7l-3.5 4z" fill="#555"/></svg>
<div class="r" style="left:309px;top:353px;width:17px;height:17px;background:linear-gradient(#fafafa,#e8e8e8);border:1px solid #b8b8b8;box-sizing:border-box;"></div>
<svg class="r" style="left:311px;top:357px;" width="13" height="10" viewBox="0 0 13 10"><path d="M4 0h9l-3.5 4v5l-2-1V4z" fill="#555"/><path d="M0 6h5l-2.5 3z" fill="#555"/></svg>
<div class="r" style="left:493px;top:353px;width:17px;height:17px;background:linear-gradient(#fafafa,#e8e8e8);border:1px solid #b8b8b8;box-sizing:border-box;"></div>
<svg class="r" style="left:498px;top:360px;" width="7" height="4" viewBox="0 0 7 4"><path d="M0 0h7l-3.5 4z" fill="#555"/></svg>
<div class="r" style="left:1088px;top:353px;width:17px;height:17px;background:linear-gradient(#fafafa,#e8e8e8);border:1px solid #b8b8b8;box-sizing:border-box;"></div>
<svg class="r" style="left:1093px;top:360px;" width="7" height="4" viewBox="0 0 7 4"><path d="M0 0h7l-3.5 4z" fill="#555"/></svg>
<div class="r" style="left:1289px;top:353px;width:17px;height:17px;background:linear-gradient(#fafafa,#e8e8e8);border:1px solid #b8b8b8;box-sizing:border-box;"></div>
<svg class="r" style="left:1294px;top:360px;" width="7" height="4" viewBox="0 0 7 4"><path d="M0 0h7l-3.5 4z" fill="#555"/></svg>
<div class="r" style="left:26px;top:372px;width:1079px;height:20px;background:#daf2d0;"></div>
<div class="r" style="left:1106px;top:372px;width:200px;height:20px;background:#f2f2f2;"></div>
<div class="t" style="left:-899px;width:2000px;text-align:center;top:372.8px;font-size:13.5px;color:#1f4d1f;font-weight:400;font-style:normal;letter-spacing:0.175px;text-indent:0.175px;">Complete</div>
<div class="t" style="left:-748px;width:2000px;text-align:center;top:372.8px;font-size:13.5px;color:#1f4d1f;font-weight:400;font-style:normal;letter-spacing:0.008px;text-indent:0.008px;">01/02/26</div>
<div class="t" style="left:330px;top:372.8px;font-size:13.5px;color:#1f4d1f;font-weight:400;font-style:normal;letter-spacing:0.498px;">All</div>
<div class="t" style="left:514px;top:372.8px;font-size:13.5px;color:#1f4d1f;font-weight:400;font-style:normal;letter-spacing:0.021px;">Make sure new 2026 FSA deduction amount begins, EH will provide list of new amounts</div>
<div class="r" style="left:26px;top:392px;width:1079px;height:20px;background:#daf2d0;"></div>
<div class="r" style="left:1106px;top:392px;width:200px;height:20px;background:#f2f2f2;"></div>
<div class="t" style="left:-899px;width:2000px;text-align:center;top:392.8px;font-size:13.5px;color:#1f4d1f;font-weight:400;font-style:normal;letter-spacing:0.175px;text-indent:0.175px;">Complete</div>
<div class="t" style="left:-748px;width:2000px;text-align:center;top:392.8px;font-size:13.5px;color:#1f4d1f;font-weight:400;font-style:normal;letter-spacing:0.008px;text-indent:0.008px;">01/02/26</div>
<div class="t" style="left:330px;top:392.8px;font-size:13.5px;color:#1f4d1f;font-weight:400;font-style:normal;letter-spacing:-0.049px;">Cindy Pauley</div>
<div class="t" style="left:514px;top:392.8px;font-size:13.5px;color:#1f4d1f;font-weight:400;font-style:normal;letter-spacing:0.033px;">Missed Hours from 10/24 - 11/04 - retro-pay 6 hours</div>
<div class="r" style="left:26px;top:412px;width:1079px;height:20px;background:#daf2d0;"></div>
<div class="r" style="left:1106px;top:412px;width:200px;height:20px;background:#f2f2f2;"></div>
<div class="t" style="left:-899px;width:2000px;text-align:center;top:412.8px;font-size:13.5px;color:#1f4d1f;font-weight:400;font-style:normal;letter-spacing:0.175px;text-indent:0.175px;">Complete</div>
<div class="t" style="left:-748px;width:2000px;text-align:center;top:412.8px;font-size:13.5px;color:#1f4d1f;font-weight:400;font-style:normal;letter-spacing:0.008px;text-indent:0.008px;">01/30/26</div>
<div class="t" style="left:330px;top:412.8px;font-size:13.5px;color:#1f4d1f;font-weight:400;font-style:normal;letter-spacing:0.498px;">All</div>
<div class="t" style="left:514px;top:412.8px;font-size:13.5px;color:#1f4d1f;font-weight:400;font-style:normal;letter-spacing:-0.014px;">Change Deduction settings, no benefit deductions on 1/30/26 paycheck except FSA</div>
<div class="r" style="left:26px;top:432px;width:1079px;height:20px;background:#daf2d0;"></div>
<div class="r" style="left:1106px;top:432px;width:200px;height:20px;background:#f2f2f2;"></div>
<div class="t" style="left:-899px;width:2000px;text-align:center;top:432.8px;font-size:13.5px;color:#1f4d1f;font-weight:400;font-style:normal;letter-spacing:0.175px;text-indent:0.175px;">Complete</div>
<div class="t" style="left:-748px;width:2000px;text-align:center;top:432.8px;font-size:13.5px;color:#1f4d1f;font-weight:400;font-style:normal;letter-spacing:0.008px;text-indent:0.008px;">01/30/26</div>
<div class="t" style="left:330px;top:432.8px;font-size:13.5px;color:#1f4d1f;font-weight:400;font-style:normal;letter-spacing:0.498px;">All</div>
<div class="t" style="left:514px;top:432.8px;font-size:13.5px;color:#1f4d1f;font-weight:400;font-style:normal;letter-spacing:-0.098px;">EH to change FSA deduction settings</div>
<div class="r" style="left:26px;top:452px;width:1079px;height:40px;background:#daf2d0;"></div>
<div class="r" style="left:1106px;top:452px;width:200px;height:40px;background:#f2f2f2;"></div>
<div class="t" style="left:-899px;width:2000px;text-align:center;top:462.8px;font-size:13.5px;color:#1f4d1f;font-weight:400;font-style:normal;letter-spacing:0.175px;text-indent:0.175px;">Complete</div>
<div class="t" style="left:-748px;width:2000px;text-align:center;top:462.8px;font-size:13.5px;color:#1f4d1f;font-weight:400;font-style:normal;letter-spacing:0.008px;text-indent:0.008px;">02/13/26</div>
<div class="t" style="left:330px;top:462.8px;font-size:13.5px;color:#1f4d1f;font-weight:400;font-style:normal;letter-spacing:0.012px;">Kate Bernstein</div>
<div class="t" style="left:514px;top:452.8px;font-size:13.5px;color:#1f4d1f;font-weight:400;font-style:normal;letter-spacing:-0.008px;">Term effective 2/1/26. Pay 40 regular hours only. Payout 40 hours of PTO. No refunds since she</div>
<div class="t" style="left:514px;top:472.8px;font-size:13.5px;color:#1f4d1f;font-weight:400;font-style:normal;letter-spacing:0.209px;">was behind on premiums. No benefit premiums deducted.</div>
<div class="r" style="left:26px;top:492px;width:1079px;height:40px;background:#daf2d0;"></div>
<div class="r" style="left:1106px;top:492px;width:200px;height:40px;background:#f2f2f2;"></div>
<div class="t" style="left:-899px;width:2000px;text-align:center;top:502.8px;font-size:13.5px;color:#1f4d1f;font-weight:400;font-style:normal;letter-spacing:0.175px;text-indent:0.175px;">Complete</div>
<div class="t" style="left:-748px;width:2000px;text-align:center;top:502.8px;font-size:13.5px;color:#1f4d1f;font-weight:400;font-style:normal;letter-spacing:0.008px;text-indent:0.008px;">02/13/26</div>
<div class="t" style="left:330px;top:502.8px;font-size:13.5px;color:#1f4d1f;font-weight:400;font-style:normal;letter-spacing:0.195px;">Daniel Aday</div>
<div class="t" style="left:514px;top:492.8px;font-size:13.5px;color:#1f4d1f;font-weight:400;font-style:normal;letter-spacing:0.010px;">Term effective 2/6/26. Pay 80 hours salary. Payout 40 hours of PTO. No benefit deductions or</div>
<div class="t" style="left:514px;top:512.8px;font-size:13.5px;color:#1f4d1f;font-weight:400;font-style:normal;letter-spacing:0.124px;">refunds needed.</div>
<div class="r" style="left:26px;top:532px;width:1079px;height:40px;background:#daf2d0;"></div>
<div class="r" style="left:1106px;top:532px;width:200px;height:40px;background:#f2f2f2;"></div>
<div class="t" style="left:-899px;width:2000px;text-align:center;top:542.8px;font-size:13.5px;color:#1f4d1f;font-weight:400;font-style:normal;letter-spacing:0.175px;text-indent:0.175px;">Complete</div>
<div class="t" style="left:-748px;width:2000px;text-align:center;top:542.8px;font-size:13.5px;color:#1f4d1f;font-weight:400;font-style:normal;letter-spacing:0.008px;text-indent:0.008px;">02/13/26</div>
<div class="t" style="left:330px;top:542.8px;font-size:13.5px;color:#1f4d1f;font-weight:400;font-style:normal;letter-spacing:0.055px;">Patrick O&#x27;Shaughnessy</div>
<div class="t" style="left:514px;top:532.8px;font-size:13.5px;color:#1f4d1f;font-weight:400;font-style:normal;letter-spacing:0.035px;">Term effective 2/6/26. Pay 80 hours salary. No benefit deductions. Refund 2 pays of benefits</div>
<div class="t" style="left:514px;top:552.8px;font-size:13.5px;color:#1f4d1f;font-weight:400;font-style:normal;letter-spacing:-0.019px;">totaling $1,707.40</div>
<div class="r" style="left:26px;top:572px;width:1079px;height:40px;background:#daf2d0;"></div>
<div class="r" style="left:1106px;top:572px;width:200px;height:40px;background:#f2f2f2;"></div>
<div class="t" style="left:-899px;width:2000px;text-align:center;top:582.8px;font-size:13.5px;color:#1f4d1f;font-weight:400;font-style:normal;letter-spacing:0.175px;text-indent:0.175px;">Complete</div>
<div class="t" style="left:-748px;width:2000px;text-align:center;top:582.8px;font-size:13.5px;color:#1f4d1f;font-weight:400;font-style:normal;letter-spacing:0.008px;text-indent:0.008px;">02/27/26</div>
<div class="t" style="left:330px;top:582.8px;font-size:13.5px;color:#1f4d1f;font-weight:400;font-style:normal;letter-spacing:0.196px;">Sean Dillon</div>
<div class="t" style="left:514px;top:572.8px;font-size:13.5px;color:#1f4d1f;font-weight:400;font-style:normal;letter-spacing:-0.018px;">LDW: 2/19/26. Pay 72 regular hours and payout 40 hours of PTO. No benefiit deductions. Refund</div>
<div class="t" style="left:514px;top:592.8px;font-size:13.5px;color:#1f4d1f;font-weight:400;font-style:normal;letter-spacing:0.064px;">1 pay period of benefits (see screenshot).</div>
<div class="r" style="left:26px;top:612px;width:1079px;height:40px;background:#ffff00;"></div>
<div class="r" style="left:1106px;top:612px;width:200px;height:40px;background:#f2f2f2;"></div>
<div class="t" style="left:-899px;width:2000px;text-align:center;top:622.8px;font-size:13.5px;color:#111;font-weight:400;font-style:normal;letter-spacing:0.212px;text-indent:0.212px;">Reminder</div>
<div class="t" style="left:-748px;width:2000px;text-align:center;top:622.8px;font-size:13.5px;color:#111;font-weight:400;font-style:normal;letter-spacing:0.142px;text-indent:0.142px;">Commission Checks</div>
<div class="t" style="left:330px;top:622.8px;font-size:13.5px;color:#111;font-weight:400;font-style:normal;letter-spacing:0.283px;">Eric Waidelich</div>
<div class="t" style="left:514px;top:612.8px;font-size:13.5px;color:#111;font-weight:400;font-style:normal;letter-spacing:0.085px;">Commission Checks - Use the Add, Adjust or Estimate Pay to add his commissions check, this</div>
<div class="t" style="left:514px;top:632.8px;font-size:13.5px;color:#111;font-weight:400;font-style:normal;letter-spacing:-0.037px;">way it can be deposited into a separate accont per his request (choose CK2-CHECKING)</div>
<div class="r" style="left:26px;top:652px;width:1079px;height:40px;background:#daf2d0;"></div>
<div class="r" style="left:1106px;top:652px;width:200px;height:40px;background:#f2f2f2;"></div>
<div class="t" style="left:-899px;width:2000px;text-align:center;top:662.8px;font-size:13.5px;color:#1f4d1f;font-weight:400;font-style:normal;letter-spacing:0.175px;text-indent:0.175px;">Complete</div>
<div class="t" style="left:-748px;width:2000px;text-align:center;top:662.8px;font-size:13.5px;color:#1f4d1f;font-weight:400;font-style:normal;letter-spacing:0.008px;text-indent:0.008px;">03/13/26</div>
<div class="t" style="left:330px;top:662.8px;font-size:13.5px;color:#1f4d1f;font-weight:400;font-style:normal;letter-spacing:0.055px;">Patrick O&#x27;Shaughnessy</div>
<div class="t" style="left:514px;top:652.8px;font-size:13.5px;color:#1f4d1f;font-weight:400;font-style:normal;letter-spacing:0.005px;">Pay $5,576.92 per Separation Agreement. This is final check, no payments to be made after this</div>
<div class="t" style="left:514px;top:672.8px;font-size:13.5px;color:#1f4d1f;font-weight:400;font-style:normal;letter-spacing:0.211px;">payment.</div>
<div class="r" style="left:26px;top:692px;width:1079px;height:80px;background:#ffff00;"></div>
<div class="r" style="left:1106px;top:692px;width:200px;height:80px;background:#f2f2f2;"></div>
<div class="t" style="left:-748px;width:2000px;text-align:center;top:722.8px;font-size:13.5px;color:#111;font-weight:400;font-style:normal;letter-spacing:0.008px;text-indent:0.008px;">03/27/26</div>
<div class="t" style="left:330px;top:722.8px;font-size:13.5px;color:#111;font-weight:400;font-style:normal;letter-spacing:0.137px;">Misti Jefferson</div>
<div class="t" style="left:514px;top:702.8px;font-size:13.5px;color:#111;font-weight:400;font-style:normal;letter-spacing:-0.069px;">LDW: 3/20/26, pay 80 regular hours, payout 40 hours of PTO, refund $303.06 benefits (3 checks</div>
<div class="t" style="left:514px;top:722.8px;font-size:13.5px;color:#111;font-weight:400;font-style:normal;letter-spacing:0.090px;">prepaid). Misti will be working PT in future but I terminated her in system, if we need to pay her</div>
<div class="t" style="left:514px;top:742.8px;font-size:13.5px;color:#111;font-weight:400;font-style:normal;letter-spacing:0.137px;">we will need to reactivate her profile and make her hourly so she doesn&#x27;t automatically get paid.</div>
<div class="r" style="left:26px;top:772px;width:1280px;height:206px;background:#f2f2f2;"></div>
<div class="r" style="left:26px;top:391px;width:1280px;height:1px;background:#ffffff;"></div>
<div class="r" style="left:26px;top:411px;width:1280px;height:1px;background:#ffffff;"></div>
<div class="r" style="left:26px;top:431px;width:1280px;height:1px;background:#ffffff;"></div>
<div class="r" style="left:26px;top:451px;width:1280px;height:1px;background:#ffffff;"></div>
<div class="r" style="left:26px;top:491px;width:1280px;height:1px;background:#ffffff;"></div>
<div class="r" style="left:26px;top:531px;width:1280px;height:1px;background:#ffffff;"></div>
<div class="r" style="left:26px;top:571px;width:1280px;height:1px;background:#ffffff;"></div>
<div class="r" style="left:26px;top:611px;width:1280px;height:1px;background:#ffffff;"></div>
<div class="r" style="left:26px;top:651px;width:1280px;height:1px;background:#ffffff;"></div>
<div class="r" style="left:26px;top:691px;width:1280px;height:1px;background:#ffffff;"></div>
<div class="r" style="left:26px;top:771px;width:1280px;height:1px;background:#ffffff;"></div>
<div class="r" style="left:26px;top:791px;width:1280px;height:1px;background:#ffffff;"></div>
<div class="r" style="left:26px;top:811px;width:1280px;height:1px;background:#ffffff;"></div>
<div class="r" style="left:26px;top:831px;width:1280px;height:1px;background:#ffffff;"></div>
<div class="r" style="left:26px;top:851px;width:1280px;height:1px;background:#ffffff;"></div>
<div class="r" style="left:26px;top:871px;width:1280px;height:1px;background:#ffffff;"></div>
<div class="r" style="left:26px;top:891px;width:1280px;height:1px;background:#ffffff;"></div>
<div class="r" style="left:26px;top:911px;width:1280px;height:1px;background:#ffffff;"></div>
<div class="r" style="left:26px;top:931px;width:1280px;height:1px;background:#ffffff;"></div>
<div class="r" style="left:26px;top:951px;width:1280px;height:1px;background:#ffffff;"></div>
<div class="r" style="left:26px;top:971px;width:1280px;height:1px;background:#ffffff;"></div>
<div class="r" style="left:26px;top:991px;width:1280px;height:1px;background:#ffffff;"></div>
<div class="r" style="left:176px;top:372px;width:1px;height:606px;background:#ffffff;"></div>
<div class="r" style="left:327px;top:372px;width:1px;height:606px;background:#ffffff;"></div>
<div class="r" style="left:511px;top:372px;width:1px;height:606px;background:#ffffff;"></div>
<div class="r" style="left:1105px;top:372px;width:1px;height:606px;background:#ffffff;"></div>
<div class="r" style="left:1306px;top:372px;width:1px;height:606px;background:#ffffff;"></div>
<div class="r" style="left:510px;top:610px;width:597px;height:43px;border:2px solid #1a6b40;box-sizing:border-box;"><div style="position:absolute;left:0;top:0;right:0;bottom:0;border:1px solid #fff;"></div></div>
<div class="r" style="left:1102px;top:648px;width:7px;height:7px;background:#1a6b40;border:1px solid #fff;box-sizing:border-box;"></div>
<div class="t" style="right:494.5px;text-align:right;top:752.8px;font-size:12.59px;color:#000;font-weight:400;font-style:normal;">16.18</div>
<div class="t" style="right:441.5px;text-align:right;top:752.8px;font-size:12.59px;color:#000;font-weight:700;font-style:normal;">48.54</div>
<div class="t" style="left:1484px;top:752.8px;font-size:13.3px;color:#000;font-weight:700;font-style:normal;">DEN</div>
<div class="t" style="right:494.5px;text-align:right;top:772.8px;font-size:12.59px;color:#000;font-weight:400;font-style:normal;">29.58</div>
<div class="t" style="right:441.5px;text-align:right;top:772.8px;font-size:12.59px;color:#000;font-weight:700;font-style:normal;">88.74</div>
<div class="t" style="left:1484px;top:772.8px;font-size:13.3px;color:#000;font-weight:700;font-style:normal;">LTD</div>
<div class="t" style="right:494.5px;text-align:right;top:792.8px;font-size:12.59px;color:#000;font-weight:400;font-style:normal;">24.52</div>
<div class="t" style="right:441.5px;text-align:right;top:792.8px;font-size:12.59px;color:#000;font-weight:700;font-style:normal;">73.56</div>
<div class="t" style="left:1484px;top:792.8px;font-size:13.3px;color:#000;font-weight:700;font-style:normal;">MED</div>
<div class="t" style="right:494.5px;text-align:right;top:812.8px;font-size:12.59px;color:#000;font-weight:400;font-style:normal;">30.74</div>
<div class="t" style="right:441.5px;text-align:right;top:812.8px;font-size:12.59px;color:#000;font-weight:700;font-style:normal;">92.22</div>
<div class="t" style="left:1484px;top:812.8px;font-size:13.3px;color:#000;font-weight:700;font-style:normal;">STD</div>
<div class="t" style="right:441.5px;text-align:right;top:832.8px;font-size:12.43px;color:#000;font-weight:700;font-style:normal;">303.06</div>
<svg class="r" style="left:1106px;top:532px;" width="51" height="39" viewBox="0 0 51 39"><rect x="0" y="0" width="51" height="39" fill="#fff"/><rect x="17" y="14" width="32" height="3" fill="#ff0"/><rect x="17" y="19.2" width="32" height="3" fill="#ff0"/><rect x="17" y="24.6" width="32" height="3" fill="#ff0"/><rect x="17" y="33" width="8.5" height="4.5" fill="#ff0"/><rect x="2.3" y="3" width="46.8" height="34.7" rx="1.5" fill="none" stroke="#aaa" stroke-width="0.6"/><path d="M10.6 3v34.7M16.7 3v34.7M25.5 3v34.7M2.3 9.6h46.8M2.3 13.4h46.8M2.3 28h46.8M2.3 30.5h46.8M2.3 33h46.8" stroke="#bbb" stroke-width="0.5"/><path d="M18 1.8h12M4 6.5h6M12 6.5h3M19 6.5h4M27 6.5h4M5 11.5h4M27 11.5h3M5 15.5h4M5 20.7h4M5 26h4M27 15.5h2M27 20.7h2M27 26h2M19 35.3h5M27 34h8M27 36.5h12" stroke="#555" stroke-width="0.8"/></svg>
<div class="r" style="left:1106px;top:572px;width:157px;height:39px;background:#fff;"></div>
<svg class="r" style="left:1106px;top:572px;" width="157" height="39" viewBox="0 0 157 39"><path d="M2 2.4h18" stroke="#8a8a8a" stroke-width="1"/><path d="M149 2.4h6" stroke="#8a8a8a" stroke-width="1"/><path d="M0 4.8h157" stroke="#f0f0f0" stroke-width="0.6"/><path d="M2 7.27h21" stroke="#8a8a8a" stroke-width="1"/><path d="M149 7.27h6" stroke="#8a8a8a" stroke-width="1"/><path d="M0 9.67h157" stroke="#f0f0f0" stroke-width="0.6"/><path d="M2 12.14h19" stroke="#8a8a8a" stroke-width="1"/><path d="M149 12.14h6" stroke="#8a8a8a" stroke-width="1"/><path d="M0 14.540000000000001h157" stroke="#f0f0f0" stroke-width="0.6"/><path d="M2 17.009999999999998h10" stroke="#8a8a8a" stroke-width="1"/><path d="M150 17.009999999999998h5" stroke="#8a8a8a" stroke-width="1"/><path d="M0 19.409999999999997h157" stroke="#f0f0f0" stroke-width="0.6"/><path d="M2 21.88h11" stroke="#8a8a8a" stroke-width="1"/><path d="M150 21.88h5" stroke="#8a8a8a" stroke-width="1"/><path d="M0 24.279999999999998h157" stroke="#f0f0f0" stroke-width="0.6"/><path d="M2 26.75h17" stroke="#8a8a8a" stroke-width="1"/><path d="M149 26.75h6" stroke="#8a8a8a" stroke-width="1"/><path d="M0 29.15h157" stroke="#f0f0f0" stroke-width="0.6"/><path d="M2 31.619999999999997h20" stroke="#8a8a8a" stroke-width="1"/><path d="M147 31.619999999999997h8" stroke="#8a8a8a" stroke-width="1"/><path d="M0 34.019999999999996h157" stroke="#f0f0f0" stroke-width="0.6"/><path d="M2 36.49h15" stroke="#8a8a8a" stroke-width="1"/><path d="M149 36.49h6" stroke="#8a8a8a" stroke-width="1"/><path d="M0 38.89h157" stroke="#f0f0f0" stroke-width="0.6"/></svg>
<div class="r" style="left:1106px;top:721px;width:200px;height:20px;background:#fff;"></div>
<svg class="r" style="left:1106px;top:721px;" width="200" height="20" viewBox="0 0 200 20"><path d="M2 2.4h15" stroke="#8a8a8a" stroke-width="1"/><path d="M190 2.4h8" stroke="#8a8a8a" stroke-width="1"/><path d="M0 4.8h200" stroke="#f0f0f0" stroke-width="0.6"/><path d="M2 7.27h15" stroke="#8a8a8a" stroke-width="1"/><path d="M190 7.27h8" stroke="#8a8a8a" stroke-width="1"/><path d="M0 9.67h200" stroke="#f0f0f0" stroke-width="0.6"/><path d="M2 12.14h15" stroke="#8a8a8a" stroke-width="1"/><path d="M190 12.14h8" stroke="#8a8a8a" stroke-width="1"/><path d="M0 14.540000000000001h200" stroke="#f0f0f0" stroke-width="0.6"/><path d="M2 17.009999999999998h15" stroke="#8a8a8a" stroke-width="1"/><path d="M190 17.009999999999998h8" stroke="#8a8a8a" stroke-width="1"/><path d="M0 19.409999999999997h200" stroke="#f0f0f0" stroke-width="0.6"/></svg>
<div class="r" style="left:0px;top:978px;width:1920px;height:31px;background:#f0f0f0;"></div>
<div class="r" style="left:0px;top:978px;width:1920px;height:1px;background:#d9d9d9;"></div>
<div class="r" style="left:0px;top:1009px;width:1920px;height:1px;background:#fdfdfd;"></div>
<svg class="r" style="left:28px;top:988px;" width="7" height="12" viewBox="0 0 7 12"><path d="M6 0.5L0.5 6 6 11.5" fill="none" stroke="#444" stroke-width="1.2"/></svg>
<svg class="r" style="left:61px;top:988px;" width="7" height="12" viewBox="0 0 7 12"><path d="M0.5 0.5L6 6 0.5 11.5" fill="none" stroke="#888" stroke-width="1.2"/></svg>
<div class="r" style="left:84px;top:982px;width:24px;height:23px;background:#fafafa;border-radius:4px;"></div>
<div class="r" style="left:90px;top:992px;width:3px;height:3px;background:#333;border-radius:1px;"></div>
<div class="r" style="left:94.5px;top:992px;width:3.0px;height:3px;background:#333;border-radius:1px;"></div>
<div class="r" style="left:99px;top:992px;width:3px;height:3px;background:#333;border-radius:1px;"></div>
<div class="t" style="left:-824.5px;width:2000px;text-align:center;top:984.8px;font-size:13.4px;color:#242424;font-weight:400;font-style:normal;">CompOne (U4F)</div>
<div class="r" style="left:238px;top:984px;width:1px;height:19px;background:#cfcfcf;"></div>
<div class="t" style="left:-703.5px;width:2000px;text-align:center;top:984.8px;font-size:12.92px;color:#242424;font-weight:400;font-style:normal;">FDI (NR2-TXU)</div>
<div class="r" style="left:356px;top:984px;width:1px;height:19px;background:#cfcfcf;"></div>
<div class="t" style="left:-597.5px;width:2000px;text-align:center;top:984.8px;font-size:13.34px;color:#242424;font-weight:400;font-style:normal;">HAA (6Y7)</div>
<div class="r" style="left:447px;top:984px;width:1px;height:19px;background:#cfcfcf;"></div>
<div class="t" style="left:-511.0px;width:2000px;text-align:center;top:984.8px;font-size:12.45px;color:#242424;font-weight:400;font-style:normal;">IME (FJV)</div>
<div class="r" style="left:531px;top:984px;width:1px;height:19px;background:#cfcfcf;"></div>
<div class="t" style="left:-424.0px;width:2000px;text-align:center;top:984.8px;font-size:12.83px;color:#242424;font-weight:400;font-style:normal;">MAI (RPC)</div>
<div class="r" style="left:621px;top:984px;width:1px;height:19px;background:#cfcfcf;"></div>
<div class="t" style="left:-335.0px;width:2000px;text-align:center;top:984.8px;font-size:12.56px;color:#242424;font-weight:400;font-style:normal;">MAI (RES)</div>
<div class="r" style="left:709px;top:984px;width:1px;height:19px;background:#cfcfcf;"></div>
<div class="r" style="left:714px;top:978px;width:107px;height:29px;background:#fff;border-radius:4px;box-shadow:0 1px 2px rgba(0,0,0,.15);"></div>
<div class="t" style="left:-233px;width:2000px;text-align:center;top:981.8px;font-size:14.21px;color:#111;font-weight:400;font-style:normal;">Rizikon (M9H)</div>
<div class="r" style="left:722px;top:1002px;width:91px;height:2px;background:#0e6b38;"></div>
<div class="t" style="left:-129.0px;width:2000px;text-align:center;top:984.8px;font-size:12.94px;color:#242424;font-weight:400;font-style:normal;">SCA (M9F)</div>
<div class="r" style="left:917px;top:984px;width:1px;height:19px;background:#cfcfcf;"></div>
<div class="t" style="left:-24.5px;width:2000px;text-align:center;top:984.8px;font-size:13.05px;color:#242424;font-weight:400;font-style:normal;">Startech (PCT)</div>
<div class="r" style="left:1033px;top:984px;width:1px;height:19px;background:#cfcfcf;"></div>
<div class="r" style="left:825px;top:984px;width:1px;height:19px;background:#cfcfcf;"></div>
<div class="r" style="left:1037px;top:982px;width:128px;height:24px;background:#a50000;border-radius:4px;"></div>
<div class="t" style="left:101px;width:2000px;text-align:center;top:984.8px;font-size:13.69px;color:#fff;font-weight:400;font-style:normal;">Benefit Premiums</div>
<div class="t" style="left:227.0px;width:2000px;text-align:center;top:984.8px;font-size:13.77px;color:#242424;font-weight:400;font-style:normal;">Emily Dawood</div>
<div class="r" style="left:1285px;top:984px;width:1px;height:19px;background:#cfcfcf;"></div>
<div class="t" style="left:342.5px;width:2000px;text-align:center;top:984.8px;font-size:13.07px;color:#242424;font-weight:400;font-style:normal;">Larry Chessler</div>
<div class="r" style="left:1398px;top:984px;width:1px;height:19px;background:#cfcfcf;"></div>
<div class="t" style="left:430.5px;width:2000px;text-align:center;top:984.8px;font-size:12.94px;color:#242424;font-weight:400;font-style:normal;">Sheet1</div>
<div class="r" style="left:1464px;top:984px;width:1px;height:19px;background:#cfcfcf;"></div>
<div class="r" style="left:1170px;top:984px;width:1px;height:19px;background:#cfcfcf;"></div>
<svg class="r" style="left:1506px;top:988px;" width="13" height="13" viewBox="0 0 13 13"><path d="M6.5 0v13M0 6.5h13" stroke="#333" stroke-width="1.1"/></svg>
<div class="r" style="left:0px;top:1010px;width:1920px;height:22px;background:#f4f4f4;"></div>
<div class="r" style="left:1620px;top:1010px;width:40px;height:22px;background:#dedede;"></div>
<div class="r" style="left:1807px;top:1016px;width:4px;height:11px;background:#555;"></div>
<div class="r" style="left:0px;top:1032px;width:1920px;height:1px;background:#d0d0d0;"></div>
<div class="r" style="left:0px;top:1033px;width:1920px;height:47px;background:#eeeeee;"></div>
<svg class="r" style="left:20px;top:1038px;" width="28" height="32" viewBox="0 0 28 32"><defs><linearGradient id="sun" x1="0" y1="0" x2="1" y2="1"><stop offset="0" stop-color="#f7c233"/><stop offset="1" stop-color="#f06a0a"/></linearGradient><linearGradient id="cld" x1="0" y1="0" x2="0" y2="1"><stop offset="0" stop-color="#cfe0f8"/><stop offset="1" stop-color="#8db8ee"/></linearGradient></defs><circle cx="10.8" cy="16" r="10" fill="url(#sun)"/><path d="M5.5 28.7a3.2 3.2 0 0 1-1-6.2 5.5 5.5 0 0 1 10-4 5 5 0 0 1 7 3.3 3.5 3.5 0 0 1 0 6.9z" fill="url(#cld)"/><circle cx="17.9" cy="7.8" r="8" fill="#c42b1c"/><text x="17.9" y="12.3" font-size="12" fill="#fff" text-anchor="middle" font-family="Liberation Sans">1</text></svg>
<div class="t" style="left:50px;top:1038.8px;font-size:10.83px;color:#222;font-weight:400;font-style:normal;">36°F</div>
<div class="t" style="left:50px;top:1054.8px;font-size:11.81px;color:#5a5a5a;font-weight:400;font-style:normal;">Partly sunny</div>
<svg class="r" style="left:551px;top:1045px;" width="23" height="23" viewBox="0 0 23 23"><defs><linearGradient id="wl" x1="0" y1="0" x2="1" y2="1"><stop offset="0" stop-color="#4fd0fb"/><stop offset="1" stop-color="#0a6ad8"/></linearGradient></defs><path d="M1 0h10v11H0V1a1 1 0 0 1 1-1zM12 0h10a1 1 0 0 1 1 1v10H12zM0 12h11v11H1a1 1 0 0 1-1-1zM12 12h11v10a1 1 0 0 1-1 1H12z" fill="url(#wl)"/></svg>
<div class="r" style="left:588px;top:1041px;width:217px;height:31px;background:#fafafa;border:1px solid #e0e0e0;border-radius:16px;box-sizing:border-box;"></div>
<svg class="r" style="left:598px;top:1047px;" width="16" height="16" viewBox="0 0 16 16"><circle cx="6.5" cy="6.5" r="5.3" fill="none" stroke="#222" stroke-width="1.6"/><path d="M10.5 10.5l4.5 4.5" stroke="#222" stroke-width="1.8"/></svg>
<div class="t" style="left:624px;top:1046.8px;font-size:12.94px;color:#666;font-weight:400;font-style:normal;">Search</div>
<div class="r" style="left:1256px;top:1037px;width:34px;height:38px;background:#f6f6f6;border-radius:4px;border:1px solid #e6e6e6;box-sizing:border-box;"></div>
<div class="r" style="left:1252px;top:1037px;width:34px;height:38px;background:#f8f8f8;border-radius:4px;border:1px solid #e4e4e4;box-sizing:border-box;"></div>
<svg class="r" style="left:817px;top:1044px;" width="24" height="24" viewBox="0 0 24 24"><defs><linearGradient id="tv" x1="1" y1="0" x2="0" y2="1"><stop offset="0" stop-color="#fbfbfb"/><stop offset="1" stop-color="#8e8e8e"/></linearGradient></defs><rect x="2" y="7" width="18" height="16" rx="1" fill="#1c1c1c"/><rect x="8" y="1" width="17.5" height="16" rx="1" fill="url(#tv)" opacity="0.92"/></svg>
<svg class="r" style="left:863px;top:1044px;" width="24" height="24" viewBox="0 0 24 24"><path d="M0 3h9l2 2h13v17H0z" fill="#f4c330"/><rect x="5" y="14" width="14" height="8" fill="#2c7fd8"/></svg>
<svg class="r" style="left:906px;top:1044px;" width="24" height="24" viewBox="0 0 24 24"><circle cx="12" cy="12" r="12" fill="#2fa7e0"/><path d="M4 16a9 9 0 0 1 17-7c-3-2-9-1-9 4h11" fill="#37d07c"/><rect x="0" y="15" width="9" height="8" fill="#c07020"/></svg>
<svg class="r" style="left:951px;top:1044px;" width="24" height="24" viewBox="0 0 24 24"><circle cx="15" cy="5" r="4" fill="#7b83eb"/><rect x="9" y="9" width="14" height="13" rx="3" fill="#7b83eb"/><rect x="0" y="8" width="13" height="13" rx="2" fill="#4b53bc"/><text x="6.5" y="18" font-size="10" fill="#fff" text-anchor="middle" font-weight="700" font-family="Liberation Sans">T</text></svg>
<svg class="r" style="left:995px;top:1044px;" width="24" height="24" viewBox="0 0 24 24"><rect x="1" y="1" width="19" height="15" fill="#2a5fc8" stroke="#9ab" /><rect x="6" y="17" width="10" height="3" fill="#889"/><circle cx="18" cy="18" r="5" fill="#ccc" stroke="#666"/></svg>
<svg class="r" style="left:1039px;top:1044px;" width="24" height="24" viewBox="0 0 24 24"><circle cx="12" cy="12" r="11" fill="none" stroke="#1e6fd0" stroke-width="2.5"/><path d="M17 8a6 6 0 1 0 0 8" fill="none" stroke="#1e6fd0" stroke-width="2.5"/></svg>
<svg class="r" style="left:1083px;top:1044px;" width="24" height="24" viewBox="0 0 24 24"><circle cx="12" cy="12" r="12" fill="#ea4335"/><path d="M12 12L22 18A12 12 0 0 1 2 18z" fill="#34a853"/><path d="M12 12L2 18A12 12 0 0 1 12 0z" fill="#fbbc05"/><circle cx="12" cy="12" r="5.5" fill="#fff"/><circle cx="12" cy="12" r="4.3" fill="#4285f4"/></svg>
<svg class="r" style="left:1126px;top:1044px;" width="24" height="24" viewBox="0 0 24 24"><defs><linearGradient id="olg" x1="0" y1="0" x2="1" y2="1"><stop offset="0" stop-color="#2ec0f5"/><stop offset="1" stop-color="#1a6fd8"/></linearGradient></defs><path d="M3 9l11-7 10 6v12a2 2 0 0 1-2 2H5a2 2 0 0 1-2-2z" fill="url(#olg)"/><path d="M3 9l11 6 10-6" fill="none" stroke="#3b4fc8" stroke-width="2"/><rect x="0" y="10" width="11" height="11" rx="2" fill="#0f5bbf"/><circle cx="5.5" cy="15.5" r="3" fill="none" stroke="#fff" stroke-width="1.6"/></svg>
<svg class="r" style="left:1170px;top:1044px;" width="24" height="24" viewBox="0 0 24 24"><rect x="7" y="1" width="16" height="22" rx="2" fill="#c350d8"/><rect x="0" y="7" width="13" height="13" rx="2" fill="#7719aa"/><text x="6.5" y="17" font-size="10" fill="#fff" text-anchor="middle" font-weight="700" font-family="Liberation Sans">N</text></svg>
<svg class="r" style="left:1214px;top:1044px;" width="24" height="24" viewBox="0 0 24 24"><rect x="1" y="1" width="22" height="22" rx="5" fill="#3b2a8a"/><circle cx="12" cy="12" r="6" fill="none" stroke="#fff" stroke-width="2"/></svg>
<svg class="r" style="left:1258px;top:1044px;" width="24" height="24" viewBox="0 0 24 24"><rect x="6" y="1" width="18" height="22" rx="2" fill="#21a366"/><rect x="6" y="8" width="18" height="8" fill="#107c41"/><rect x="0" y="7" width="13" height="13" rx="2" fill="#185c37"/><text x="6.5" y="17" font-size="10" fill="#fff" text-anchor="middle" font-weight="700" font-family="Liberation Sans">X</text></svg>
<svg class="r" style="left:1302px;top:1044px;" width="24" height="24" viewBox="0 0 24 24"><rect x="2" y="0" width="18" height="24" rx="2" fill="#5c6b80"/><rect x="4" y="2" width="14" height="5" fill="#62c8f5"/><rect x="4" y="9" width="4" height="3.5" fill="#d8dde5"/><rect x="9" y="9" width="4" height="3.5" fill="#d8dde5"/><rect x="14" y="9" width="4" height="3.5" fill="#d8dde5"/><rect x="4" y="14" width="4" height="3.5" fill="#d8dde5"/><rect x="9" y="14" width="4" height="3.5" fill="#d8dde5"/><rect x="4" y="19" width="4" height="3.5" fill="#d8dde5"/><rect x="9" y="19" width="4" height="3.5" fill="#d8dde5"/><rect x="14" y="14" width="4" height="8.5" fill="#1a4f9a"/></svg>
<svg class="r" style="left:1346px;top:1044px;" width="24" height="24" viewBox="0 0 24 24"><rect x="0" y="0" width="22" height="22" rx="4" fill="#b51200"/><path d="M4 17c4-3 6-8 6-12 0-2 2-2 2 0 0 4 2 8 7 10 1 1 0 2-1 1-4-1-9 0-13 2-1 1-2 0-1-1z" fill="none" stroke="#fff" stroke-width="1.5"/></svg>
<svg class="r" style="left:964px;top:1039px;" width="16" height="16" viewBox="0 0 16 16"><circle cx="8" cy="8" r="8" fill="#c42b1c"/><text x="8" y="12.5" font-size="12" fill="#fff" text-anchor="middle" font-family="Liberation Sans">1</text></svg>
<div class="r" style="left:872px;top:1072px;width:6px;height:3px;background:#8a8a8a;border-radius:2px;"></div>
<div class="r" style="left:915px;top:1072px;width:6px;height:3px;background:#8a8a8a;border-radius:2px;"></div>
<div class="r" style="left:960px;top:1072px;width:6px;height:3px;background:#8a8a8a;border-radius:2px;"></div>
<div class="r" style="left:1092px;top:1072px;width:6px;height:3px;background:#8a8a8a;border-radius:2px;"></div>
<div class="r" style="left:1135px;top:1072px;width:6px;height:3px;background:#8a8a8a;border-radius:2px;"></div>
<div class="r" style="left:1179px;top:1072px;width:6px;height:3px;background:#8a8a8a;border-radius:2px;"></div>
<div class="r" style="left:1223px;top:1072px;width:6px;height:3px;background:#8a8a8a;border-radius:2px;"></div>
<div class="r" style="left:1311px;top:1072px;width:6px;height:3px;background:#8a8a8a;border-radius:2px;"></div>
<div class="r" style="left:1355px;top:1072px;width:6px;height:3px;background:#8a8a8a;border-radius:2px;"></div>
<div class="r" style="left:1262px;top:1073px;width:16px;height:3px;background:#1e6fd0;border-radius:2px;"></div>
<svg class="r" style="left:1699px;top:1051px;" width="12" height="7" viewBox="0 0 12 7"><path d="M0.5 6.5L6 1l5.5 5.5" fill="none" stroke="#222" stroke-width="1.2"/></svg>
<svg class="r" style="left:1732px;top:1045px;" width="10" height="20" viewBox="0 0 10 20"><rect x="2" y="0.5" width="6" height="12" rx="3" fill="none" stroke="#2060d0" stroke-width="1.3"/><path d="M0.5 9a4.5 4.5 0 0 0 9 0M5 14v4" fill="none" stroke="#2060d0" stroke-width="1.3"/></svg>
<svg class="r" style="left:1760px;top:1049px;" width="18" height="14" viewBox="0 0 18 14"><path d="M1 5a11 11 0 0 1 16 0M3.5 8a7.5 7.5 0 0 1 11 0M6 11a4 4 0 0 1 6 0" fill="none" stroke="#222" stroke-width="1.3"/><circle cx="9" cy="13" r="1.2" fill="#222"/></svg>
<svg class="r" style="left:1784px;top:1048px;" width="17" height="16" viewBox="0 0 17 16"><path d="M1 5h3l4-4v14l-4-4H1z" fill="none" stroke="#222" stroke-width="1.2"/><path d="M11 5a4 4 0 0 1 0 6M13 3a7 7 0 0 1 0 10" fill="none" stroke="#222" stroke-width="1.2"/></svg>
<svg class="r" style="left:1808px;top:1047px;" width="22" height="16" viewBox="0 0 22 16"><rect x="0.5" y="4.5" width="19" height="10" rx="2" fill="#1b8a2a" stroke="#222"/><rect x="20" y="7" width="2" height="5" fill="#222"/><path d="M11 1L8 9h3l-1 5" fill="none" stroke="#fff" stroke-width="1.3"/></svg>
<div class="t" style="right:20px;text-align:right;top:1038.8px;font-size:11.33px;color:#222;font-weight:400;font-style:normal;">12:13 PM</div>
<div class="t" style="right:19px;text-align:right;top:1054.8px;font-size:12.3px;color:#222;font-weight:400;font-style:normal;">3/24/2026</div>
</body></html>
